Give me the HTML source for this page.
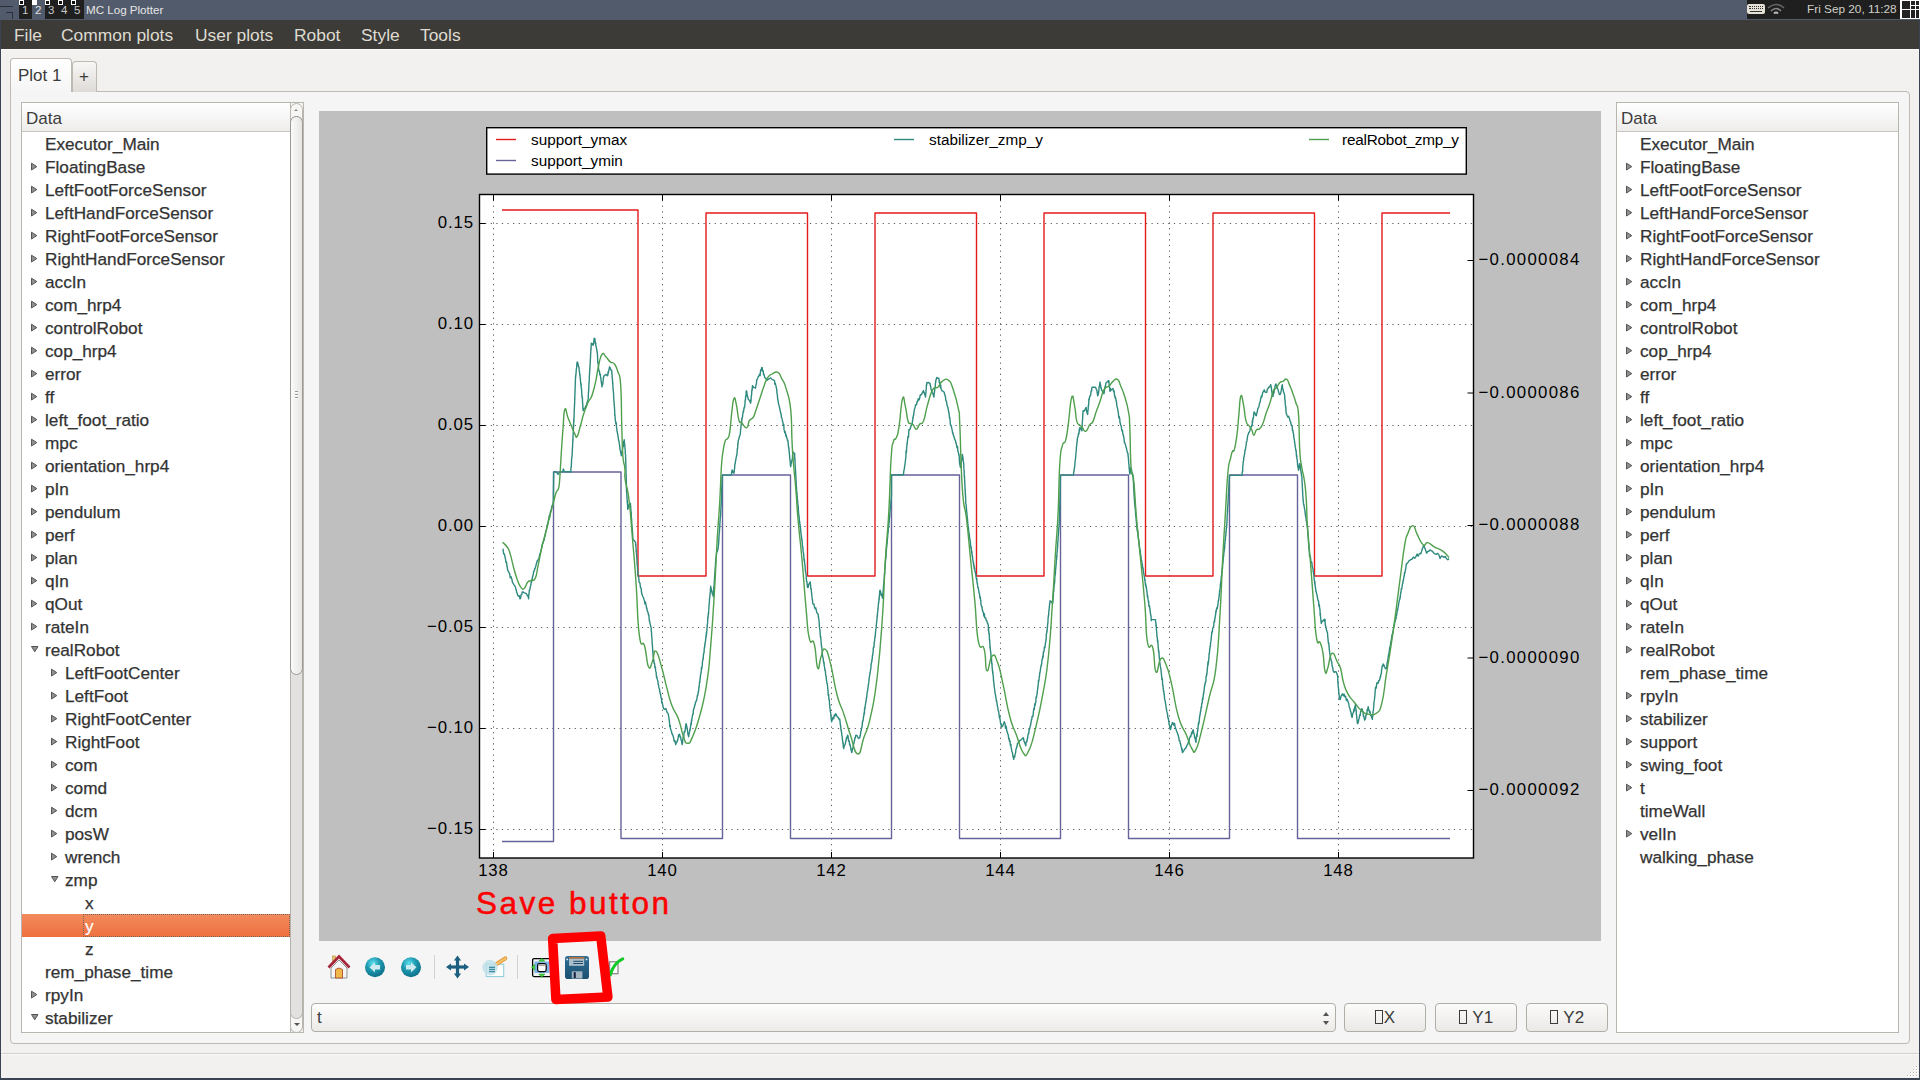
<!DOCTYPE html>
<html><head><meta charset="utf-8"><style>
*{margin:0;padding:0;box-sizing:border-box}
html,body{width:1920px;height:1080px;overflow:hidden;background:#f2f1f0;font-family:"Liberation Sans", sans-serif;}
div{position:absolute}
.row{font-size:17.2px;color:#333;-webkit-text-stroke:0.25px #333;white-space:nowrap;line-height:22px}
.white{color:#fff;-webkit-text-stroke:0.2px #fff}
.arr-r{width:0;height:0;border-top:3.5px solid transparent;border-bottom:3.5px solid transparent;border-left:5.5px solid #7f7f7f}
.arr-d{width:0;height:0;border-left:3.5px solid transparent;border-right:3.5px solid transparent;border-top:6px solid #7f7f7f}
.sel{height:23px;background:linear-gradient(#f28a5c,#ee7040)}
.seldot{height:23px;border:1px dotted #7d6458}
.menu{font-size:17.4px;color:#dfdbd2;top:23px;line-height:24px;white-space:nowrap}
.btn{top:1003px;height:29px;border:1px solid #b1ada7;border-radius:4px;background:linear-gradient(#fbfbfa,#ebe9e7);font-size:17px;color:#3c3c3c;text-align:center;line-height:27px;width:82px}
.tofu{display:inline-block;width:8px;height:14px;border:1px solid #3c3c3c;vertical-align:-1px;margin-right:1px}
</style></head><body>
<!-- top panel -->
<div style="left:0;top:0;width:1920px;height:20px;background:#525b6b"></div>
<div style="left:19px;top:0;width:13px;height:19px;background:#1f1f1f"></div>
<div style="left:45px;top:0;width:39px;height:19px;background:#1f1f1f"></div>
<div style="left:19px;top:0;width:5px;height:5px;border:1px solid #fff;background:#111"></div>
<div style="left:32px;top:0;width:5px;height:5px;background:#fff"></div>
<div style="left:45px;top:0;width:5px;height:5px;border:1px solid #fff;background:#111"></div>
<div style="left:58px;top:0;width:5px;height:5px;border:1px solid #fff;background:#111"></div>
<div style="left:71px;top:0;width:5px;height:5px;border:1px solid #fff;background:#111"></div>
<div style="left:0;top:6px;width:13px;height:1px;background:#2a2f38"></div>
<div style="left:6px;top:12px;width:7px;height:1px;background:#2a2f38"></div>
<div style="left:12px;top:12px;width:1px;height:7px;background:#2a2f38"></div>
<div style="left:22px;top:3px;font-size:11.5px;color:#c9c9c9;line-height:14px">1</div>
<div style="left:35px;top:3px;font-size:11.5px;color:#e4e4e4;line-height:14px">2</div>
<div style="left:48px;top:3px;font-size:11.5px;color:#c9c9c9;line-height:14px">3</div>
<div style="left:61px;top:3px;font-size:11.5px;color:#c9c9c9;line-height:14px">4</div>
<div style="left:74px;top:3px;font-size:11.5px;color:#c9c9c9;line-height:14px">5</div>
<div style="left:86px;top:2px;font-size:11.6px;color:#e6e6e6;line-height:15px;white-space:nowrap">MC Log Plotter</div>
<div style="left:1747px;top:0;width:153px;height:19px;background:#1f1f1f"></div>
<div style="left:1747px;top:4px;width:18px;height:10px;background:#e4e0d6;border-radius:2px"></div>
<div style="left:1749px;top:6px;width:14px;height:1px;border-top:1px dotted #333"></div>
<div style="left:1749px;top:8px;width:14px;height:1px;border-top:1px dotted #333"></div>
<div style="left:1750px;top:11px;width:12px;height:1px;background:#333"></div>
<svg style="position:absolute;left:1767px;top:3px" width="18" height="13"><path d="M1,5 Q9,-2 17,5" fill="none" stroke="#666" stroke-width="1.6"/><path d="M4,8 Q9,3 14,8" fill="none" stroke="#888" stroke-width="1.6"/><path d="M7,10.5 Q9,8.5 11,10.5" fill="none" stroke="#bbb" stroke-width="1.8"/></svg>
<div style="left:1807px;top:2px;font-size:11.8px;color:#d2cfc8;line-height:15px;white-space:nowrap">Fri Sep 20, 11:28</div>
<div style="left:1900px;top:0;width:20px;height:19px;background:#fff"></div>
<div style="left:1902px;top:1px;width:8px;height:8px;background:#222"></div>
<div style="left:1902px;top:10px;width:8px;height:8px;background:#222"></div>
<div style="left:1911px;top:1px;width:3.5px;height:3.5px;background:#222"></div>
<div style="left:1915.5px;top:1px;width:3.5px;height:3.5px;background:#222"></div>
<div style="left:1911px;top:5.5px;width:3.5px;height:3.5px;background:#222"></div>
<div style="left:1915.5px;top:5.5px;width:3.5px;height:3.5px;background:#222"></div>
<div style="left:1911px;top:10px;width:3.5px;height:8px;background:#222"></div>
<div style="left:1915.5px;top:10px;width:3.5px;height:8px;background:#222"></div>
<!-- window frame -->
<div style="left:0;top:20px;width:1px;height:1060px;background:#3b4452"></div>
<div style="left:1919px;top:20px;width:1px;height:1060px;background:#3b4452"></div>
<div style="left:0;top:1078px;width:1920px;height:2px;background:#3b4452"></div>
<!-- menubar -->
<div style="left:1px;top:20px;width:1918px;height:29px;background:#3c3b37"></div>
<div style="left:1px;top:49px;width:1918px;height:1px;background:#fbfbfb"></div>
<div class="menu" style="left:14px">File</div>
<div class="menu" style="left:61px">Common plots</div>
<div class="menu" style="left:195px">User plots</div>
<div class="menu" style="left:294px">Robot</div>
<div class="menu" style="left:361px">Style</div>
<div class="menu" style="left:420px">Tools</div>
<!-- tab pane -->
<div style="left:10px;top:91px;width:1900px;height:953px;border:1px solid #bdb9b3;border-radius:0 4px 4px 4px;background:#f5f5f5"></div>
<div style="left:72px;top:61px;width:25px;height:31px;border:1px solid #bdb9b3;border-bottom:none;border-radius:4px 4px 0 0;background:linear-gradient(#f7f7f6,#dedbd7)"></div>
<div style="left:79px;top:65.5px;font-size:17px;color:#3c3c3c;line-height:22px">+</div>
<div style="left:10px;top:58px;width:62px;height:34px;border:1px solid #bdb9b3;border-bottom:none;border-radius:4px 4px 0 0;background:linear-gradient(#ffffff,#f5f5f5)"></div>
<div style="left:18px;top:65px;font-size:17px;color:#3c3c3c;line-height:22px;white-space:nowrap">Plot 1</div>
<div style="left:1px;top:1053px;width:1918px;height:1px;background:#d3d0cb"></div>
<div style="left:1px;top:1054px;width:1918px;height:1px;background:#fafafa"></div>
<div style="left:1916px;top:1066px;width:2px;height:2px;background:#b8b4ae;border-right:1px solid #fff;border-bottom:1px solid #fff;box-sizing:content-box;width:1px;height:1px"></div><div style="left:1913px;top:1069px;width:2px;height:2px;background:#b8b4ae;border-right:1px solid #fff;border-bottom:1px solid #fff;box-sizing:content-box;width:1px;height:1px"></div><div style="left:1916px;top:1069px;width:2px;height:2px;background:#b8b4ae;border-right:1px solid #fff;border-bottom:1px solid #fff;box-sizing:content-box;width:1px;height:1px"></div><div style="left:1910px;top:1072px;width:2px;height:2px;background:#b8b4ae;border-right:1px solid #fff;border-bottom:1px solid #fff;box-sizing:content-box;width:1px;height:1px"></div><div style="left:1913px;top:1072px;width:2px;height:2px;background:#b8b4ae;border-right:1px solid #fff;border-bottom:1px solid #fff;box-sizing:content-box;width:1px;height:1px"></div><div style="left:1916px;top:1072px;width:2px;height:2px;background:#b8b4ae;border-right:1px solid #fff;border-bottom:1px solid #fff;box-sizing:content-box;width:1px;height:1px"></div><div style="left:1907px;top:1075px;width:2px;height:2px;background:#b8b4ae;border-right:1px solid #fff;border-bottom:1px solid #fff;box-sizing:content-box;width:1px;height:1px"></div><div style="left:1910px;top:1075px;width:2px;height:2px;background:#b8b4ae;border-right:1px solid #fff;border-bottom:1px solid #fff;box-sizing:content-box;width:1px;height:1px"></div><div style="left:1913px;top:1075px;width:2px;height:2px;background:#b8b4ae;border-right:1px solid #fff;border-bottom:1px solid #fff;box-sizing:content-box;width:1px;height:1px"></div><div style="left:1916px;top:1075px;width:2px;height:2px;background:#b8b4ae;border-right:1px solid #fff;border-bottom:1px solid #fff;box-sizing:content-box;width:1px;height:1px"></div>
<!-- left tree -->
<div style="left:21px;top:102px;width:283px;height:931px;border:1px solid #b9b5af;background:#fff;overflow:hidden">
</div>
<div style="left:22px;top:103px;width:268px;height:29px;background:linear-gradient(#ffffff,#eeedec);border-bottom:1px solid #c8c4be"></div>
<div style="left:26px;top:107.5px;font-size:17px;color:#3c3c3c;line-height:22px">Data</div>
<div class="row" style="left:45px;top:133px">Executor_Main</div>
<div class="row" style="left:45px;top:156px">FloatingBase</div>
<div class="row" style="left:45px;top:179px">LeftFootForceSensor</div>
<div class="row" style="left:45px;top:202px">LeftHandForceSensor</div>
<div class="row" style="left:45px;top:225px">RightFootForceSensor</div>
<div class="row" style="left:45px;top:248px">RightHandForceSensor</div>
<div class="row" style="left:45px;top:271px">accIn</div>
<div class="row" style="left:45px;top:294px">com_hrp4</div>
<div class="row" style="left:45px;top:317px">controlRobot</div>
<div class="row" style="left:45px;top:340px">cop_hrp4</div>
<div class="row" style="left:45px;top:363px">error</div>
<div class="row" style="left:45px;top:386px">ff</div>
<div class="row" style="left:45px;top:409px">left_foot_ratio</div>
<div class="row" style="left:45px;top:432px">mpc</div>
<div class="row" style="left:45px;top:455px">orientation_hrp4</div>
<div class="row" style="left:45px;top:478px">pIn</div>
<div class="row" style="left:45px;top:501px">pendulum</div>
<div class="row" style="left:45px;top:524px">perf</div>
<div class="row" style="left:45px;top:547px">plan</div>
<div class="row" style="left:45px;top:570px">qIn</div>
<div class="row" style="left:45px;top:593px">qOut</div>
<div class="row" style="left:45px;top:616px">rateIn</div>
<div class="row" style="left:45px;top:639px">realRobot</div>
<div class="row" style="left:65px;top:662px">LeftFootCenter</div>
<div class="row" style="left:65px;top:685px">LeftFoot</div>
<div class="row" style="left:65px;top:708px">RightFootCenter</div>
<div class="row" style="left:65px;top:731px">RightFoot</div>
<div class="row" style="left:65px;top:754px">com</div>
<div class="row" style="left:65px;top:777px">comd</div>
<div class="row" style="left:65px;top:800px">dcm</div>
<div class="row" style="left:65px;top:823px">posW</div>
<div class="row" style="left:65px;top:846px">wrench</div>
<div class="row" style="left:65px;top:869px">zmp</div>
<div class="row" style="left:85px;top:892px">x</div>
<div class="sel" style="top:914px;left:22px;width:268px"></div>
<div class="seldot" style="top:914px;left:83px;width:207px"></div>
<div class="row white" style="left:85px;top:915px">y</div>
<div class="row" style="left:85px;top:938px">z</div>
<div class="row" style="left:45px;top:961px">rem_phase_time</div>
<div class="row" style="left:45px;top:984px">rpyIn</div>
<div class="row" style="left:45px;top:1007px">stabilizer</div>
<div style="left:290px;top:103px;width:13px;height:929px;background:#f5f5f4;border-left:1px solid #b9b5af"></div>
<div style="left:290px;top:103px;width:13px;height:26px;border:1px solid #b9b5af;border-radius:6.5px 6.5px 0 0;background:#f6f6f5"></div>
<div style="left:294px;top:109px;width:0;height:0;border-left:2.5px solid transparent;border-right:2.5px solid transparent;border-bottom:2.5px solid #8a8a8a"></div>
<div style="left:290px;top:116px;width:13px;height:903px;border:1px solid #b5b1ab;border-radius:6.5px;background:#e2e1df"></div>
<div style="left:290px;top:1006px;width:13px;height:27px;border:1px solid #b9b5af;border-top:none;border-radius:0 0 6.5px 6.5px;background:#f6f6f5"></div>
<div style="left:290px;top:1000px;width:13px;height:19px;border:1px solid #b5b1ab;border-top:none;border-radius:0 0 6.5px 6.5px;background:#e2e1df"></div>
<div style="left:293.5px;top:1023px;width:0;height:0;border-left:3px solid transparent;border-right:3px solid transparent;border-top:3px solid #555"></div>
<div style="left:290px;top:116px;width:13px;height:559px;border:1px solid #9d9994;border-radius:6.5px;background:linear-gradient(90deg,#fbfbfb,#e6e5e4)"></div><div style="left:295px;top:391px;width:3px;height:1px;background:#9a9a9a;border-bottom:1px solid #fff;box-sizing:content-box"></div><div style="left:295px;top:394px;width:3px;height:1px;background:#9a9a9a;border-bottom:1px solid #fff;box-sizing:content-box"></div><div style="left:295px;top:397px;width:3px;height:1px;background:#9a9a9a;border-bottom:1px solid #fff;box-sizing:content-box"></div>
<!-- canvas -->
<div style="left:319px;top:111px;width:1282px;height:830px;background:#bfbfbf"></div>
<!-- right tree -->
<div style="left:1616px;top:102px;width:283px;height:931px;border:1px solid #b9b5af;background:#fff"></div>
<div style="left:1617px;top:103px;width:281px;height:29px;background:linear-gradient(#ffffff,#eeedec);border-bottom:1px solid #c8c4be"></div>
<div style="left:1621px;top:107.5px;font-size:17px;color:#3c3c3c;line-height:22px">Data</div>
<div class="row" style="left:1640px;top:133px">Executor_Main</div>
<div class="row" style="left:1640px;top:156px">FloatingBase</div>
<div class="row" style="left:1640px;top:179px">LeftFootForceSensor</div>
<div class="row" style="left:1640px;top:202px">LeftHandForceSensor</div>
<div class="row" style="left:1640px;top:225px">RightFootForceSensor</div>
<div class="row" style="left:1640px;top:248px">RightHandForceSensor</div>
<div class="row" style="left:1640px;top:271px">accIn</div>
<div class="row" style="left:1640px;top:294px">com_hrp4</div>
<div class="row" style="left:1640px;top:317px">controlRobot</div>
<div class="row" style="left:1640px;top:340px">cop_hrp4</div>
<div class="row" style="left:1640px;top:363px">error</div>
<div class="row" style="left:1640px;top:386px">ff</div>
<div class="row" style="left:1640px;top:409px">left_foot_ratio</div>
<div class="row" style="left:1640px;top:432px">mpc</div>
<div class="row" style="left:1640px;top:455px">orientation_hrp4</div>
<div class="row" style="left:1640px;top:478px">pIn</div>
<div class="row" style="left:1640px;top:501px">pendulum</div>
<div class="row" style="left:1640px;top:524px">perf</div>
<div class="row" style="left:1640px;top:547px">plan</div>
<div class="row" style="left:1640px;top:570px">qIn</div>
<div class="row" style="left:1640px;top:593px">qOut</div>
<div class="row" style="left:1640px;top:616px">rateIn</div>
<div class="row" style="left:1640px;top:639px">realRobot</div>
<div class="row" style="left:1640px;top:662px">rem_phase_time</div>
<div class="row" style="left:1640px;top:685px">rpyIn</div>
<div class="row" style="left:1640px;top:708px">stabilizer</div>
<div class="row" style="left:1640px;top:731px">support</div>
<div class="row" style="left:1640px;top:754px">swing_foot</div>
<div class="row" style="left:1640px;top:777px">t</div>
<div class="row" style="left:1640px;top:800px">timeWall</div>
<div class="row" style="left:1640px;top:823px">velIn</div>
<div class="row" style="left:1640px;top:846px">walking_phase</div>
<!-- combo + buttons -->
<div style="left:311px;top:1003px;width:1025px;height:29px;border:1px solid #b1ada7;border-radius:4px;background:linear-gradient(#fdfdfd,#ecebe9)"></div>
<div style="left:317px;top:1007px;font-size:17px;color:#3c3c3c;line-height:22px">t</div>
<div style="left:1323px;top:1012px;width:0;height:0;border-left:3px solid transparent;border-right:3px solid transparent;border-bottom:4px solid #555"></div>
<div style="left:1323px;top:1021px;width:0;height:0;border-left:3px solid transparent;border-right:3px solid transparent;border-top:4px solid #555"></div>
<div class="btn" style="left:1344px"><span class="tofu"></span>X</div>
<div class="btn" style="left:1435px"><span class="tofu"></span> Y1</div>
<div class="btn" style="left:1526px"><span class="tofu"></span> Y2</div>
<svg style="position:absolute;left:0;top:0" width="1920" height="1080">

<!-- home -->
<g transform="translate(328,955)">
 <rect x="4.5" y="1" width="3" height="6" fill="#e8c46a" stroke="#b58a3a" stroke-width="0.6"/>
 <path d="M3,13 L11,5 L19,13 V23 H3 Z" fill="#f4f4f4" stroke="#8a9494" stroke-width="1"/>
 <path d="M7.5,23 V14.5 Q11,11.5 14.5,14.5 V23 Z" fill="#f0b84a" stroke="#a8401c" stroke-width="0.8"/>
 <path d="M0.5,12.5 L11,1.5 L21.5,12.5" fill="none" stroke="#a8243a" stroke-width="2.6" stroke-linejoin="miter"/>
</g>
<!-- back -->
<defs>
 <radialGradient id="bl" cx="0.4" cy="0.3" r="0.75"><stop offset="0" stop-color="#5fe0f0"/><stop offset="0.45" stop-color="#1e9ab0"/><stop offset="1" stop-color="#0d6b86"/></radialGradient>
 <linearGradient id="fd" x1="0" y1="0" x2="0" y2="1"><stop offset="0" stop-color="#2f6f95"/><stop offset="1" stop-color="#1a4f70"/></linearGradient>
 <clipPath id="axclip"><rect x="480" y="195" width="993" height="663"/></clipPath>
</defs>
<circle cx="375" cy="967.3" r="10" fill="url(#bl)"/>
<path d="M369.5,967.3 L375,962.2 V965 H380 V969.6 H375 V972.4 Z" fill="#cdeaf0"/>
<circle cx="411" cy="967.3" r="10" fill="url(#bl)"/>
<path d="M416.5,967.3 L411,962.2 V965 H406 V969.6 H411 V972.4 Z" fill="#cdeaf0"/>
<line x1="434.5" y1="955" x2="434.5" y2="979" stroke="#d4d2cf" stroke-width="1"/>
<!-- move -->
<g fill="#1d5f80" transform="translate(457.5,967)">
 <rect x="-1.6" y="-8" width="3.2" height="16"/><rect x="-8" y="-1.6" width="16" height="3.2"/>
 <path d="M0,-11.5 L-3.6,-6.5 H3.6 Z M0,11.5 L-3.6,6.5 H3.6 Z M-11.5,0 L-6.5,-3.6 V3.6 Z M11.5,0 L6.5,-3.6 V3.6 Z"/>
</g>
<!-- zoom -->
<g transform="translate(478,950)">
 <rect x="8.3" y="14.3" width="17.4" height="12.3" fill="#fdfdfe" stroke="#94cdd9" stroke-width="1.1"/>
 <line x1="18.6" y1="14" x2="27.3" y2="8.4" stroke="#e2923a" stroke-width="4" stroke-linecap="round"/>
 <line x1="18.6" y1="14" x2="27.3" y2="8.4" stroke="#f5c162" stroke-width="2.4" stroke-linecap="round"/>
 <circle cx="12" cy="17.6" r="7.3" fill="#bfe0e8" fill-opacity="0.8" stroke="#c4e2ea" stroke-width="0.8"/>
 <g stroke="#3f8ea3" stroke-width="1.4"><line x1="11" y1="17.3" x2="17" y2="17.3"/><line x1="11" y1="19.4" x2="17" y2="19.4"/><line x1="11" y1="21.6" x2="17" y2="21.6"/></g>
</g>
<line x1="517.5" y1="955" x2="517.5" y2="979" stroke="#d4d2cf" stroke-width="1"/>
<!-- subplots -->
<g transform="translate(532,958)">
 <rect x="0.6" y="0.6" width="19" height="18" fill="#f2f2f2" stroke="#000" stroke-width="1.3" rx="1.5"/>
 <rect x="2.5" y="3.5" width="15" height="11.5" fill="#7fb6ea"/>
 <rect x="5.6" y="5.6" width="8.6" height="8" fill="#fff" stroke="#000" stroke-width="1.2" rx="1.8"/>
 <rect x="6.5" y="6.3" width="7" height="1.8" fill="#aaa"/>
 <path d="M9.8,0.2 L6.8,3.2 H12.8 Z M9.8,19.3 L6.8,16 H12.8 Z M-0.5,9.3 L2.8,6.3 V12.3 Z" fill="#3fcf3f" stroke="#1a9a1a" stroke-width="0.5"/>
</g>
<!-- save -->
<g transform="translate(565,956)">
 <rect x="0" y="0" width="24" height="23" rx="2.8" fill="url(#fd)"/>
 <rect x="4" y="1" width="15.5" height="1.8" fill="#b8703e"/>
 <rect x="4" y="2.8" width="15.2" height="7" fill="#a9bfcc"/>
 <g stroke="#1d4868" stroke-width="1"><line x1="8.3" y1="5.3" x2="18" y2="5.3"/><line x1="8.3" y1="7.5" x2="18" y2="7.5"/></g>
 <rect x="6.8" y="15.3" width="10.6" height="7.2" fill="#a2b4c0"/>
 <rect x="8.7" y="16.2" width="2.1" height="5.8" fill="#16243f"/>
 <circle cx="2.2" cy="3.4" r="0.9" fill="#e8eef2"/><circle cx="21.6" cy="3.4" r="0.9" fill="#e8eef2"/>
</g>
<!-- check -->
<g transform="translate(609,957)">
 <rect x="0.6" y="4.8" width="8.4" height="11.9" fill="#fff" stroke="#8a8a8a" stroke-width="1.3"/>
 <path d="M1.2,18 Q4.5,6 13.7,1.8" fill="none" stroke="#14c828" stroke-width="3.1" stroke-linecap="round"/>
</g>
<!-- red annotation rectangle -->
<path d="M552.6,938.6 L600.7,935.9 L607.9,997 L555.9,999.4 Z" fill="none" stroke="#ff0000" stroke-width="9.5" stroke-linejoin="round"/>

<g fill="#909090" stroke="#555" stroke-width="1" stroke-linejoin="round"><path d="M31.5,163.2 V170 L36.8,166.6 Z"/><path d="M31.5,186.2 V193 L36.8,189.6 Z"/><path d="M31.5,209.2 V216 L36.8,212.6 Z"/><path d="M31.5,232.2 V239 L36.8,235.6 Z"/><path d="M31.5,255.2 V262 L36.8,258.6 Z"/><path d="M31.5,278.2 V285 L36.8,281.6 Z"/><path d="M31.5,301.2 V308 L36.8,304.6 Z"/><path d="M31.5,324.2 V331 L36.8,327.6 Z"/><path d="M31.5,347.2 V354 L36.8,350.6 Z"/><path d="M31.5,370.2 V377 L36.8,373.6 Z"/><path d="M31.5,393.2 V400 L36.8,396.6 Z"/><path d="M31.5,416.2 V423 L36.8,419.6 Z"/><path d="M31.5,439.2 V446 L36.8,442.6 Z"/><path d="M31.5,462.2 V469 L36.8,465.6 Z"/><path d="M31.5,485.2 V492 L36.8,488.6 Z"/><path d="M31.5,508.2 V515 L36.8,511.6 Z"/><path d="M31.5,531.2 V538 L36.8,534.6 Z"/><path d="M31.5,554.2 V561 L36.8,557.6 Z"/><path d="M31.5,577.2 V584 L36.8,580.6 Z"/><path d="M31.5,600.2 V607 L36.8,603.6 Z"/><path d="M31.5,623.2 V630 L36.8,626.6 Z"/><path d="M31.5,646.5 H38 L34.75,651.8 Z"/><path d="M51.5,669.2 V676 L56.8,672.6 Z"/><path d="M51.5,692.2 V699 L56.8,695.6 Z"/><path d="M51.5,715.2 V722 L56.8,718.6 Z"/><path d="M51.5,738.2 V745 L56.8,741.6 Z"/><path d="M51.5,761.2 V768 L56.8,764.6 Z"/><path d="M51.5,784.2 V791 L56.8,787.6 Z"/><path d="M51.5,807.2 V814 L56.8,810.6 Z"/><path d="M51.5,830.2 V837 L56.8,833.6 Z"/><path d="M51.5,853.2 V860 L56.8,856.6 Z"/><path d="M51.5,876.5 H58 L54.75,881.8 Z"/><path d="M31.5,991.2 V998 L36.8,994.6 Z"/><path d="M31.5,1014.5 H38 L34.75,1019.8 Z"/><path d="M1626.5,163.2 V170 L1631.8,166.6 Z"/><path d="M1626.5,186.2 V193 L1631.8,189.6 Z"/><path d="M1626.5,209.2 V216 L1631.8,212.6 Z"/><path d="M1626.5,232.2 V239 L1631.8,235.6 Z"/><path d="M1626.5,255.2 V262 L1631.8,258.6 Z"/><path d="M1626.5,278.2 V285 L1631.8,281.6 Z"/><path d="M1626.5,301.2 V308 L1631.8,304.6 Z"/><path d="M1626.5,324.2 V331 L1631.8,327.6 Z"/><path d="M1626.5,347.2 V354 L1631.8,350.6 Z"/><path d="M1626.5,370.2 V377 L1631.8,373.6 Z"/><path d="M1626.5,393.2 V400 L1631.8,396.6 Z"/><path d="M1626.5,416.2 V423 L1631.8,419.6 Z"/><path d="M1626.5,439.2 V446 L1631.8,442.6 Z"/><path d="M1626.5,462.2 V469 L1631.8,465.6 Z"/><path d="M1626.5,485.2 V492 L1631.8,488.6 Z"/><path d="M1626.5,508.2 V515 L1631.8,511.6 Z"/><path d="M1626.5,531.2 V538 L1631.8,534.6 Z"/><path d="M1626.5,554.2 V561 L1631.8,557.6 Z"/><path d="M1626.5,577.2 V584 L1631.8,580.6 Z"/><path d="M1626.5,600.2 V607 L1631.8,603.6 Z"/><path d="M1626.5,623.2 V630 L1631.8,626.6 Z"/><path d="M1626.5,646.2 V653 L1631.8,649.6 Z"/><path d="M1626.5,692.2 V699 L1631.8,695.6 Z"/><path d="M1626.5,715.2 V722 L1631.8,718.6 Z"/><path d="M1626.5,738.2 V745 L1631.8,741.6 Z"/><path d="M1626.5,761.2 V768 L1631.8,764.6 Z"/><path d="M1626.5,784.2 V791 L1631.8,787.6 Z"/><path d="M1626.5,830.2 V837 L1631.8,833.6 Z"/></g>
<rect x="479.5" y="194.5" width="994.0" height="663.5" fill="#fff"/>
<g stroke="#444" stroke-width="0.9" stroke-dasharray="1.2 4.4" fill="none">
<line x1="493.5" y1="194.5" x2="493.5" y2="858"/>
<line x1="662.5" y1="194.5" x2="662.5" y2="858"/>
<line x1="831.5" y1="194.5" x2="831.5" y2="858"/>
<line x1="1000.5" y1="194.5" x2="1000.5" y2="858"/>
<line x1="1169.5" y1="194.5" x2="1169.5" y2="858"/>
<line x1="1338.5" y1="194.5" x2="1338.5" y2="858"/>
<line x1="479.5" y1="223.5" x2="1473.5" y2="223.5"/>
<line x1="479.5" y1="324.5" x2="1473.5" y2="324.5"/>
<line x1="479.5" y1="425.5" x2="1473.5" y2="425.5"/>
<line x1="479.5" y1="526.5" x2="1473.5" y2="526.5"/>
<line x1="479.5" y1="627.5" x2="1473.5" y2="627.5"/>
<line x1="479.5" y1="728.5" x2="1473.5" y2="728.5"/>
<line x1="479.5" y1="829.5" x2="1473.5" y2="829.5"/>
</g>
<g fill="none" stroke-width="1.4" stroke-linejoin="round" clip-path="url(#axclip)">
<path d="M502,210 L638,210 L638,576 L706,576 L706,213 L807.5,213 L807.5,576 L875,576 L875,213 L976.5,213 L976.5,576 L1044,576 L1044,213 L1145.5,213 L1145.5,576 L1213,576 L1213,213 L1314.5,213 L1314.5,576 L1382,576 L1382,213 L1450,213" stroke="#e41a1c"/>
<path d="M502,841.5 L553.5,841.5 L553.5,472 L621,472 L621,838.5 L722.5,838.5 L722.5,475 L790.5,475 L790.5,838.5 L891.5,838.5 L891.5,475 L959.5,475 L959.5,838.5 L1060.5,838.5 L1060.5,475 L1128.5,475 L1128.5,838.5 L1229.5,838.5 L1229.5,475 L1297.5,475 L1297.5,838.5 L1450,838.5" stroke="#66639a"/>
<path d="M502.6,548.9 L503.0,549.1 L503.4,552.0 L503.8,554.1 L504.2,553.9 L504.6,554.5 L505.0,557.1 L505.4,558.6 L505.7,560.5 L506.0,562.5 L506.3,561.6 L506.6,562.9 L507.0,566.3 L507.3,567.4 L507.6,569.9 L507.9,570.7 L508.2,571.1 L508.9,572.4 L509.6,573.6 L510.3,577.9 L511.0,576.7 L511.4,577.8 L511.7,578.7 L512.0,579.7 L512.4,582.2 L513.3,583.7 L514.2,585.1 L515.1,586.4 L515.5,587.4 L515.9,589.1 L516.4,590.8 L516.8,592.6 L517.2,593.3 L517.9,595.8 L518.6,596.3 L519.3,595.7 L520.0,598.9 L520.6,598.2 L521.1,594.7 L521.7,594.6 L522.2,591.9 L522.8,592.0 L524.2,592.7 L525.6,593.3 L526.5,593.7 L527.4,595.8 L528.3,596.8 L528.6,598.8 L528.8,594.2 L529.1,593.7 L529.3,590.3 L529.6,590.0 L529.9,589.7 L530.1,587.6 L530.4,586.4 L530.7,585.5 L531.0,584.0 L531.3,581.6 L531.6,581.9 L531.9,579.2 L532.1,580.6 L532.4,577.0 L532.7,576.9 L533.0,574.9 L533.3,574.6 L533.6,571.8 L533.9,571.1 L534.4,570.7 L534.8,568.2 L535.3,568.2 L535.8,566.2 L536.2,564.3 L536.7,562.8 L537.2,560.6 L537.8,560.8 L538.3,559.1 L538.9,558.8 L539.4,555.8 L539.8,554.0 L540.2,553.6 L540.6,552.1 L541.0,550.5 L541.3,549.1 L541.7,547.6 L542.1,545.5 L542.5,543.7 L542.9,543.3 L543.2,541.5 L543.6,541.1 L544.0,540.6 L544.3,538.7 L544.6,537.4 L545.0,535.8 L545.4,534.3 L545.7,532.2 L546.0,531.0 L546.3,530.2 L546.6,529.8 L546.9,526.3 L547.3,524.6 L547.6,525.8 L547.9,522.7 L548.2,522.1 L548.5,519.7 L548.9,519.2 L549.2,515.8 L549.5,518.0 L549.9,515.9 L550.2,513.0 L550.6,511.4 L551.0,510.8 L551.4,508.8 L551.8,506.4 L552.1,505.7 L552.5,504.8 L552.9,504.2 L553.3,501.7 L553.3,501.1 L553.3,499.1 L553.4,499.0 L553.4,495.6 L553.4,495.8 L553.4,494.8 L553.4,492.0 L553.5,489.2 L553.5,488.7 L553.5,488.5 L553.5,487.5 L553.5,487.2 L553.6,483.3 L553.6,482.9 L553.6,482.2 L553.6,480.1 L553.6,476.5 L553.7,478.4 L553.7,478.5 L553.7,475.9 L553.7,472.6 L553.8,472.2 L555.2,471.7 L556.6,472.3 L558.1,474.4 L559.5,472.5 L561.0,471.9 L562.4,471.7 L562.8,471.9 L563.3,468.9 L563.8,470.2 L564.4,471.7 L566.0,471.7 L567.5,471.7 L569.1,471.7 L570.7,471.7 L570.8,472.2 L570.9,468.2 L571.1,467.1 L571.2,466.9 L571.3,466.2 L571.4,464.0 L571.5,462.3 L571.6,458.7 L571.8,458.5 L571.9,457.2 L572.0,455.9 L572.1,455.0 L572.2,454.3 L572.2,452.1 L572.3,451.9 L572.4,449.9 L572.4,448.2 L572.5,447.3 L572.6,446.3 L572.6,445.4 L572.7,442.8 L572.8,441.7 L572.8,439.3 L572.9,441.0 L573.0,439.5 L573.0,436.6 L573.1,435.0 L573.2,432.9 L573.2,433.0 L573.3,431.8 L573.3,432.4 L573.4,429.2 L573.5,426.9 L573.5,423.9 L573.6,426.4 L573.7,423.9 L573.7,420.8 L573.8,421.3 L573.9,418.2 L573.9,422.0 L574.0,418.3 L574.1,416.5 L574.1,414.4 L574.2,413.3 L574.2,409.8 L574.3,410.5 L574.4,407.7 L574.4,408.5 L574.5,404.5 L574.5,404.4 L574.6,405.1 L574.6,404.2 L574.7,400.1 L574.7,398.4 L574.8,399.4 L574.8,398.1 L574.9,394.9 L574.9,393.9 L575.0,392.5 L575.0,390.7 L575.1,389.9 L575.1,390.4 L575.1,388.5 L575.2,388.6 L575.2,385.1 L575.3,383.7 L575.4,381.5 L575.4,381.0 L575.5,378.5 L575.5,376.7 L575.6,377.8 L575.6,375.8 L575.8,375.9 L575.9,374.0 L576.1,373.2 L576.2,370.8 L576.4,368.5 L576.6,368.0 L576.7,366.2 L576.9,364.1 L577.0,362.2 L577.2,362.6 L577.7,362.3 L578.1,365.0 L578.5,366.4 L579.0,367.5 L579.1,368.3 L579.3,371.5 L579.5,371.6 L579.6,373.3 L579.8,375.2 L579.9,374.5 L580.0,374.6 L580.2,378.7 L580.4,378.5 L580.5,381.8 L580.6,382.1 L580.8,384.1 L580.9,385.2 L581.1,383.6 L581.2,387.7 L581.4,388.3 L581.5,388.9 L581.6,390.2 L581.7,391.8 L581.8,394.3 L581.9,395.7 L582.0,397.2 L582.1,395.8 L582.2,398.2 L582.4,397.7 L582.5,401.3 L582.6,403.3 L582.7,403.3 L582.8,405.6 L582.9,406.9 L583.0,409.0 L583.1,408.5 L583.2,410.6 L584.2,408.4 L585.3,407.8 L585.8,405.6 L586.2,406.8 L586.7,404.7 L587.2,402.1 L587.6,401.0 L588.1,399.4 L588.2,398.2 L588.3,396.9 L588.3,395.2 L588.4,393.7 L588.5,391.5 L588.6,390.8 L588.6,391.7 L588.7,389.3 L588.8,387.5 L588.9,385.8 L588.9,384.8 L589.0,383.7 L589.1,381.4 L589.2,380.9 L589.3,379.6 L589.3,377.3 L589.4,375.9 L589.5,374.4 L589.6,373.0 L589.6,373.6 L589.7,369.0 L589.8,369.8 L589.9,368.1 L589.9,366.7 L590.0,366.1 L590.1,364.7 L590.2,364.5 L590.2,362.1 L590.3,360.5 L590.4,358.7 L590.5,357.9 L590.5,357.5 L590.6,354.9 L590.7,352.8 L590.8,351.3 L590.9,350.2 L590.9,348.5 L591.0,349.7 L591.1,347.6 L591.1,345.7 L591.2,346.0 L591.3,343.2 L592.1,343.6 L592.9,345.3 L593.3,344.7 L593.6,343.3 L594.0,339.6 L594.3,338.1 L594.7,338.3 L594.9,338.8 L595.2,342.0 L595.4,343.8 L595.7,342.6 L595.9,346.3 L596.1,346.3 L596.4,347.6 L596.6,348.9 L596.9,350.5 L597.1,352.2 L597.2,351.8 L597.4,354.0 L597.5,355.1 L597.6,358.3 L597.7,361.2 L597.9,363.3 L598.0,361.6 L598.1,361.6 L598.2,364.3 L598.4,365.2 L598.5,367.5 L598.8,370.9 L599.1,370.8 L599.4,370.9 L599.7,374.0 L600.0,375.0 L600.3,374.2 L600.6,377.2 L600.8,378.1 L601.0,379.7 L601.2,381.4 L601.4,382.9 L601.6,383.8 L601.8,385.7 L602.0,386.9 L602.2,384.9 L602.5,383.2 L602.8,384.3 L603.0,381.7 L603.2,380.4 L603.5,377.0 L603.8,377.0 L604.0,375.8 L606.1,374.4 L607.5,375.8 L607.8,375.3 L608.1,371.9 L608.4,373.0 L608.7,370.3 L609.0,369.8 L609.3,368.0 L609.6,366.8 L610.3,368.2 L611.0,370.3 L611.7,370.3 L611.8,371.3 L611.9,374.6 L612.0,373.7 L612.1,374.9 L612.2,377.9 L612.3,377.5 L612.5,379.6 L612.6,382.3 L612.7,384.0 L612.8,382.4 L612.9,386.0 L613.0,388.8 L613.1,388.3 L613.2,390.8 L613.3,390.7 L613.4,391.7 L613.5,393.3 L613.6,393.8 L613.6,396.0 L613.7,397.4 L613.8,398.8 L613.9,401.4 L614.0,401.3 L614.1,401.4 L614.2,405.3 L614.3,404.5 L614.4,406.4 L614.5,408.1 L614.6,409.2 L614.6,409.9 L614.7,411.9 L614.8,415.7 L614.9,414.2 L615.0,416.0 L615.1,417.5 L615.3,420.0 L615.5,421.0 L615.7,422.4 L615.9,423.9 L616.2,422.5 L616.4,425.0 L616.6,427.4 L616.8,429.1 L617.0,431.3 L617.2,431.4 L617.4,433.3 L617.7,433.9 L617.9,435.6 L618.1,436.7 L618.4,438.6 L618.6,440.4 L618.8,440.8 L619.1,441.7 L619.3,443.9 L619.5,444.4 L619.8,447.6 L620.0,449.1 L620.2,450.1 L620.5,451.3 L620.7,452.6 L620.9,453.1 L621.2,455.1 L621.4,455.7 L621.6,453.3 L621.9,452.8 L622.1,451.0 L622.3,451.1 L622.6,448.5 L622.8,447.6 L623.0,446.8 L623.3,446.4 L623.5,442.9 L623.7,441.4 L624.0,441.9 L624.2,439.7 L624.3,440.0 L624.5,442.9 L624.6,443.3 L624.7,445.2 L624.8,444.8 L625.0,448.8 L625.1,448.9 L625.2,449.9 L625.3,454.3 L625.5,454.3 L625.6,455.0 L625.6,459.8 L625.7,458.0 L625.7,458.6 L625.7,460.4 L625.8,463.2 L625.8,462.8 L625.8,464.6 L625.9,466.0 L625.9,465.9 L625.9,468.2 L626.0,468.9 L626.0,469.5 L626.0,472.9 L626.1,474.0 L626.1,474.7 L626.1,475.1 L626.2,475.3 L626.2,479.1 L626.2,479.8 L626.3,479.5 L626.3,482.5 L626.3,482.3 L626.4,485.1 L626.4,486.6 L626.4,488.1 L626.5,489.3 L626.5,490.4 L626.6,492.0 L626.7,492.0 L626.8,494.2 L626.9,495.5 L627.0,497.1 L627.1,499.0 L627.2,500.8 L627.3,503.2 L627.4,500.4 L627.5,504.7 L627.6,505.5 L627.7,509.4 L627.8,508.5 L628.4,508.1 L629.1,504.2 L629.8,505.0 L630.4,503.3 L630.5,504.1 L630.6,507.0 L630.7,506.3 L630.8,508.6 L630.9,509.9 L631.0,511.3 L631.1,512.1 L631.2,512.2 L631.3,515.9 L631.4,517.7 L631.5,518.0 L631.6,518.4 L631.7,521.0 L631.7,522.7 L631.8,523.3 L631.9,524.8 L632.0,527.6 L632.1,526.4 L632.2,528.3 L632.3,528.3 L632.4,530.8 L632.5,532.1 L632.6,533.3 L632.7,534.9 L632.8,538.7 L632.9,538.1 L633.0,539.6 L634.3,540.8 L635.6,542.2 L635.7,545.7 L635.8,544.8 L635.9,544.5 L636.0,548.0 L636.1,548.0 L636.2,551.9 L636.3,550.4 L636.4,552.4 L636.5,552.7 L636.6,555.8 L636.7,556.0 L636.8,558.3 L636.9,559.3 L637.0,560.5 L637.1,563.4 L637.2,564.7 L637.3,565.2 L637.4,565.6 L637.5,566.7 L637.6,569.4 L637.7,572.9 L637.8,571.4 L637.9,572.4 L638.0,573.9 L638.1,575.9 L638.4,576.1 L638.7,577.5 L638.9,579.6 L639.2,582.5 L639.5,582.4 L639.8,583.1 L640.0,583.3 L640.3,586.5 L640.6,587.5 L640.9,587.6 L641.2,589.0 L641.4,591.4 L641.7,593.7 L642.0,594.0 L642.5,595.9 L643.0,596.8 L643.5,597.6 L644.0,599.5 L644.4,600.5 L644.9,604.0 L645.4,602.0 L645.9,604.4 L646.2,605.3 L646.5,608.3 L646.9,608.0 L647.2,611.0 L647.5,610.9 L647.9,612.3 L648.2,613.1 L648.5,614.8 L648.8,614.7 L649.0,616.4 L649.3,620.9 L649.5,620.6 L649.8,621.9 L650.1,623.6 L650.3,624.5 L650.6,626.2 L650.8,626.2 L651.1,627.8 L651.2,628.9 L651.3,631.5 L651.4,631.5 L651.5,631.9 L651.6,634.4 L651.7,635.4 L651.8,637.9 L651.9,637.9 L652.0,639.0 L652.1,641.0 L652.2,644.3 L652.3,644.0 L652.4,645.6 L652.5,646.8 L652.6,648.5 L652.7,650.4 L652.8,652.3 L652.9,650.6 L653.0,654.9 L653.1,654.9 L653.2,656.3 L653.4,657.3 L653.6,661.3 L653.9,660.0 L654.1,663.4 L654.3,663.8 L654.5,663.1 L654.8,665.9 L655.0,667.4 L655.2,667.9 L655.4,667.0 L655.6,670.3 L655.9,671.7 L656.1,672.1 L656.3,674.5 L656.6,677.6 L656.8,676.8 L657.1,678.0 L657.3,679.4 L657.6,680.2 L657.9,681.5 L658.1,683.6 L658.4,685.1 L658.6,685.6 L658.9,687.4 L659.2,688.6 L659.5,688.6 L659.7,691.8 L660.0,691.9 L660.3,694.1 L660.6,694.3 L660.8,696.0 L661.1,698.0 L661.4,697.9 L661.7,702.9 L662.0,701.7 L662.2,702.9 L662.5,703.6 L662.8,705.6 L663.5,708.3 L664.3,709.2 L665.0,709.2 L665.8,708.6 L666.5,710.6 L667.3,712.8 L668.0,713.3 L668.2,714.1 L668.4,714.7 L668.6,716.0 L668.9,717.7 L669.1,719.8 L669.3,720.5 L669.5,722.4 L669.7,726.5 L670.0,726.8 L670.2,725.3 L670.4,727.9 L670.6,728.9 L671.0,730.3 L671.5,731.4 L671.9,733.8 L672.3,733.8 L672.7,735.1 L673.2,736.3 L673.6,737.9 L674.0,740.6 L674.4,741.4 L674.9,740.6 L675.3,742.8 L675.7,744.5 L676.2,742.4 L676.7,742.7 L677.2,740.8 L677.7,740.2 L678.1,737.9 L678.6,734.8 L679.1,735.9 L679.6,734.1 L679.9,735.6 L680.2,737.2 L680.6,736.7 L680.9,739.4 L681.2,739.9 L681.6,741.2 L681.9,743.6 L682.2,744.5 L682.4,743.6 L682.7,741.0 L682.9,738.9 L683.2,736.8 L683.4,737.4 L683.7,737.8 L683.9,735.3 L684.2,731.8 L684.4,731.9 L684.6,731.9 L684.9,731.9 L685.1,730.1 L685.4,728.0 L685.6,726.5 L685.9,723.9 L686.1,723.7 L686.4,724.5 L686.6,726.0 L686.9,726.8 L687.1,729.0 L687.4,729.8 L687.7,731.8 L687.9,734.2 L688.2,734.8 L688.4,735.8 L688.7,736.7 L688.9,735.2 L689.2,732.6 L689.4,732.7 L689.6,732.1 L689.9,729.2 L690.1,730.2 L690.4,727.3 L690.6,726.7 L690.8,724.7 L691.1,722.5 L691.3,724.5 L691.5,720.0 L691.8,720.8 L692.0,718.0 L692.2,717.5 L692.5,715.2 L692.7,714.3 L693.0,714.3 L693.2,714.0 L693.4,709.9 L693.7,709.5 L693.9,708.2 L694.3,707.8 L694.7,705.0 L695.1,705.0 L695.5,702.2 L695.8,702.3 L696.2,700.8 L696.6,700.3 L697.0,698.2 L697.4,695.3 L697.8,695.2 L698.0,694.6 L698.2,691.5 L698.4,692.1 L698.5,691.5 L698.7,689.3 L698.9,686.9 L699.1,687.3 L699.3,685.0 L699.5,682.3 L699.7,681.9 L699.8,682.4 L700.0,679.3 L700.2,678.5 L700.4,676.7 L700.6,674.1 L700.8,673.9 L701.0,673.5 L701.1,672.1 L701.3,670.4 L701.5,667.1 L701.7,669.2 L701.9,667.4 L702.1,666.4 L702.3,665.4 L702.4,662.3 L702.6,660.9 L702.8,660.5 L703.0,658.9 L703.2,659.3 L703.4,654.6 L703.5,654.8 L703.7,653.0 L703.9,653.0 L704.1,652.6 L704.2,649.5 L704.4,647.3 L704.6,647.3 L704.8,645.7 L705.0,643.1 L705.1,644.2 L705.3,641.5 L705.5,641.4 L705.7,638.2 L705.8,639.3 L706.0,635.4 L706.2,636.6 L706.4,632.5 L706.5,634.4 L706.7,631.3 L706.9,630.4 L707.0,627.5 L707.1,627.6 L707.2,626.8 L707.3,624.2 L707.5,623.4 L707.6,622.9 L707.7,621.2 L707.8,617.0 L707.9,618.3 L708.0,617.9 L708.1,616.4 L708.2,615.8 L708.4,612.8 L708.5,614.8 L708.6,611.7 L708.7,610.0 L708.8,609.4 L708.9,608.0 L709.0,605.9 L709.1,603.8 L709.2,604.2 L709.4,602.3 L709.5,598.7 L709.6,598.2 L709.7,598.4 L709.8,596.8 L709.9,595.7 L710.0,594.7 L710.1,592.9 L710.3,593.1 L710.4,589.6 L710.5,588.5 L710.6,587.9 L710.7,586.3 L711.0,588.3 L711.4,589.7 L711.7,591.7 L712.0,591.0 L712.3,594.0 L712.6,594.6 L713.0,594.4 L713.3,596.7 L713.4,595.2 L713.5,596.1 L713.6,593.5 L713.7,590.9 L713.7,587.6 L713.8,587.9 L713.9,586.6 L714.0,586.0 L714.1,586.9 L714.2,584.0 L714.3,582.3 L714.4,579.7 L714.5,578.1 L714.6,577.7 L714.6,576.1 L714.7,578.2 L714.8,573.5 L714.9,571.9 L715.0,572.3 L715.1,569.9 L715.2,567.3 L715.3,568.5 L715.4,565.5 L715.5,563.2 L715.5,563.5 L715.6,562.3 L715.7,560.1 L715.8,559.8 L715.9,557.8 L716.2,557.3 L716.4,554.3 L716.7,551.8 L716.9,550.2 L717.2,551.2 L717.5,551.2 L717.7,549.7 L718.0,548.8 L718.2,548.0 L718.5,544.8 L718.6,543.5 L718.7,543.2 L718.8,539.2 L718.9,540.1 L718.9,538.5 L719.0,536.7 L719.1,535.0 L719.2,533.0 L719.3,532.9 L719.4,532.7 L719.5,529.7 L719.6,529.2 L719.7,526.7 L719.8,526.3 L719.8,523.7 L719.9,523.7 L720.0,521.8 L720.1,521.0 L720.2,518.7 L720.3,516.8 L720.4,516.3 L720.5,516.3 L720.6,515.5 L720.7,512.3 L720.7,512.1 L720.8,510.7 L720.9,509.0 L721.0,505.7 L721.1,505.9 L721.2,504.9 L721.2,502.3 L721.3,503.1 L721.3,501.3 L721.4,499.8 L721.4,495.3 L721.5,497.1 L721.5,495.9 L721.6,492.6 L721.6,493.5 L721.7,491.2 L721.7,489.6 L721.8,487.8 L721.8,486.1 L721.9,485.4 L721.9,487.6 L722.0,483.3 L722.0,482.0 L722.1,479.8 L722.1,478.5 L722.2,477.2 L722.2,475.6 L722.3,475.1 L723.8,475.1 L725.2,475.1 L726.7,475.1 L728.2,475.1 L729.6,475.1 L731.1,475.1 L731.4,474.3 L731.8,471.4 L732.1,470.0 L733.0,472.5 L734.0,473.2 L734.1,470.7 L734.3,471.5 L734.4,469.2 L734.6,468.6 L734.7,466.5 L734.9,464.4 L735.0,464.0 L735.2,463.9 L735.5,461.0 L735.8,460.0 L736.0,458.0 L736.2,457.8 L736.5,455.9 L736.8,455.3 L737.0,453.7 L737.1,452.7 L737.2,450.4 L737.4,448.4 L737.5,448.9 L737.6,448.1 L737.7,446.6 L737.8,443.5 L738.0,443.9 L738.1,442.4 L738.2,440.7 L738.6,439.7 L739.0,438.6 L739.4,436.5 L739.8,435.8 L740.2,434.3 L740.3,433.9 L740.5,431.2 L740.6,429.0 L740.8,429.0 L740.9,428.0 L741.1,424.7 L741.2,424.5 L741.4,424.5 L741.5,422.4 L741.7,421.4 L741.8,418.7 L742.0,419.6 L742.1,417.4 L742.4,417.9 L742.7,414.6 L743.0,412.8 L743.3,411.0 L743.5,411.8 L743.8,409.7 L744.1,407.5 L744.4,408.2 L744.7,405.7 L744.9,405.1 L745.0,403.6 L745.2,399.9 L745.3,400.2 L745.5,399.6 L745.6,396.3 L745.8,397.1 L745.9,396.3 L746.1,394.5 L746.2,391.4 L746.4,390.8 L746.8,391.5 L747.1,394.6 L747.5,396.0 L747.9,397.7 L748.2,399.1 L748.6,399.3 L749.3,400.5 L749.9,401.5 L750.6,403.2 L750.7,400.0 L750.9,401.3 L751.0,401.4 L751.2,397.3 L751.3,396.0 L751.5,395.7 L751.6,394.1 L751.8,391.0 L751.9,390.3 L752.1,388.6 L752.2,390.3 L752.4,386.2 L752.5,385.6 L753.8,387.5 L755.1,387.6 L755.4,388.2 L755.7,386.9 L756.0,385.1 L756.4,384.0 L756.7,379.9 L757.0,379.8 L757.7,378.2 L758.3,376.5 L759.0,375.9 L759.5,374.2 L760.1,375.7 L760.6,370.0 L761.1,370.9 L761.7,367.7 L762.2,367.5 L762.5,370.1 L762.9,371.4 L763.2,370.9 L763.5,374.8 L763.9,374.1 L764.2,375.3 L764.9,377.9 L765.5,378.2 L766.1,378.6 L766.8,380.5 L768.1,379.3 L769.4,378.6 L770.7,377.9 L772.0,379.4 L773.2,379.8 L774.5,380.5 L774.8,384.3 L775.2,383.1 L775.5,384.2 L775.8,385.4 L776.2,386.7 L776.5,388.9 L776.7,388.8 L776.8,390.5 L777.0,393.7 L777.2,394.2 L777.4,395.2 L777.5,397.1 L777.7,399.1 L777.9,399.9 L778.1,401.4 L778.2,401.3 L778.4,403.2 L778.7,404.2 L779.0,405.0 L779.3,407.0 L779.6,407.5 L779.9,409.3 L780.2,410.8 L780.5,412.0 L780.8,413.3 L781.1,414.3 L781.4,417.4 L781.7,417.4 L782.0,418.4 L782.2,419.0 L782.5,421.5 L782.7,421.5 L783.0,422.8 L783.3,425.3 L783.5,424.8 L783.8,424.6 L784.0,429.4 L784.3,430.4 L784.7,432.7 L785.1,431.3 L785.5,433.4 L785.9,436.1 L786.2,434.9 L786.6,437.3 L787.0,438.2 L787.4,440.5 L787.8,440.0 L788.2,443.3 L788.3,445.5 L788.5,445.8 L788.6,447.5 L788.8,448.2 L788.9,447.7 L789.0,450.9 L789.2,451.1 L789.3,453.7 L789.5,454.1 L789.6,456.0 L789.7,457.4 L789.9,459.7 L790.0,461.0 L790.1,460.5 L790.3,462.8 L790.4,465.6 L790.6,465.9 L790.7,466.7 L790.9,464.7 L791.2,464.0 L791.4,462.5 L791.6,462.4 L791.9,460.2 L792.1,459.3 L792.4,459.8 L792.6,454.9 L792.8,454.0 L793.1,452.0 L793.3,452.4 L794.6,453.7 L794.7,453.5 L794.7,457.2 L794.8,458.0 L794.9,460.7 L795.0,458.4 L795.0,460.9 L795.1,464.6 L795.2,465.5 L795.3,466.7 L795.3,468.0 L795.4,468.5 L795.5,469.8 L795.6,471.2 L795.6,473.4 L795.7,473.7 L795.8,475.5 L795.9,478.0 L795.9,476.8 L796.0,478.5 L796.1,481.2 L796.2,481.7 L796.2,483.1 L796.3,486.7 L796.4,486.4 L796.5,486.9 L796.5,489.8 L796.6,490.0 L796.7,493.8 L796.8,491.5 L797.0,493.3 L797.1,495.4 L797.2,496.0 L797.3,500.1 L797.5,499.7 L797.6,500.1 L797.7,502.3 L797.8,502.4 L797.9,503.9 L798.1,505.9 L798.2,509.5 L798.3,506.2 L798.4,510.2 L798.5,512.4 L798.7,513.1 L798.8,515.6 L798.9,515.5 L799.0,516.5 L799.2,517.5 L799.3,518.1 L799.4,520.3 L799.6,523.3 L799.7,521.8 L799.9,524.2 L800.1,525.1 L800.2,526.2 L800.4,526.1 L800.6,529.3 L800.7,531.2 L800.9,532.5 L801.1,534.6 L801.2,534.9 L801.4,535.8 L801.6,538.0 L801.7,539.7 L801.9,539.5 L802.1,540.2 L802.2,542.1 L802.4,545.5 L802.6,546.8 L802.7,546.2 L802.9,548.6 L803.1,550.7 L803.2,552.5 L803.4,552.5 L803.6,553.1 L803.7,554.8 L803.9,557.8 L804.0,560.1 L804.2,560.5 L804.3,559.1 L804.5,562.0 L804.6,562.5 L804.8,564.1 L804.9,564.8 L805.1,566.2 L805.2,568.0 L805.4,571.1 L805.5,571.3 L805.7,572.3 L805.8,573.2 L806.0,573.7 L806.1,575.5 L806.3,578.3 L806.4,579.2 L806.6,581.6 L806.7,581.2 L806.9,582.2 L807.0,581.9 L807.2,585.2 L807.3,584.4 L807.5,587.4 L808.1,587.6 L808.8,584.1 L809.5,583.4 L810.1,582.0 L810.3,582.0 L810.4,584.2 L810.6,585.1 L810.8,588.5 L810.9,589.0 L811.1,588.9 L811.3,589.5 L811.5,592.7 L811.6,593.6 L811.8,594.3 L812.0,597.4 L812.1,597.9 L812.3,599.6 L812.5,600.2 L812.6,601.6 L812.8,603.5 L813.4,604.2 L814.0,604.3 L814.6,607.7 L815.2,608.7 L815.8,607.8 L816.4,610.8 L817.0,613.1 L817.6,613.3 L818.2,614.3 L818.3,616.9 L818.5,616.6 L818.6,618.2 L818.8,618.2 L818.9,619.9 L819.0,620.3 L819.2,622.5 L819.3,624.9 L819.4,626.5 L819.6,628.4 L819.7,628.7 L819.9,628.9 L820.0,631.6 L820.1,632.3 L820.3,635.5 L820.4,637.0 L820.5,637.3 L820.7,636.5 L820.8,638.4 L821.0,640.4 L821.1,640.8 L821.2,643.3 L821.4,644.8 L821.5,646.3 L821.6,646.9 L821.8,647.1 L821.9,648.5 L822.1,650.5 L822.2,651.9 L822.4,654.5 L822.6,656.1 L822.8,656.8 L823.0,657.4 L823.2,659.0 L823.4,660.5 L823.6,662.2 L823.8,663.1 L824.0,662.0 L824.2,665.8 L824.4,666.5 L824.6,667.0 L824.8,669.2 L825.0,670.3 L825.2,671.2 L825.4,670.9 L825.6,674.0 L825.8,675.7 L826.0,676.4 L826.2,676.2 L826.4,679.5 L826.6,681.1 L826.8,681.8 L827.0,683.3 L827.2,683.9 L827.4,684.8 L827.6,686.8 L827.7,688.6 L827.9,689.0 L828.0,690.9 L828.2,695.2 L828.3,694.0 L828.5,694.7 L828.6,694.2 L828.8,697.2 L828.9,699.2 L829.1,699.0 L829.2,700.8 L829.4,700.1 L829.5,704.2 L829.7,704.3 L829.8,706.9 L830.0,708.8 L830.1,708.6 L830.3,711.1 L830.4,711.6 L830.6,712.4 L830.7,713.7 L830.9,714.4 L831.0,717.8 L831.2,718.7 L831.3,718.1 L831.5,721.2 L831.6,721.7 L832.3,719.6 L832.9,717.5 L833.6,718.8 L834.3,715.0 L834.9,716.1 L835.6,713.6 L836.4,714.9 L837.2,716.7 L838.1,717.4 L838.9,719.1 L839.7,719.0 L839.9,720.7 L840.1,722.3 L840.2,723.3 L840.4,725.5 L840.6,725.3 L840.8,728.1 L841.0,729.9 L841.2,729.7 L841.3,731.5 L841.5,731.9 L841.7,733.5 L841.9,735.4 L842.1,736.1 L842.2,736.9 L842.4,739.1 L842.6,740.6 L842.8,742.1 L843.0,743.8 L843.2,742.7 L843.3,747.2 L843.5,747.0 L843.7,748.5 L844.1,746.4 L844.5,745.4 L844.9,744.9 L845.3,744.0 L845.7,741.4 L846.1,740.6 L846.5,737.5 L846.9,737.9 L847.3,736.3 L847.7,735.1 L848.0,736.0 L848.3,738.7 L848.6,740.9 L849.0,741.5 L849.3,741.0 L849.6,744.7 L849.9,744.2 L850.2,745.8 L850.5,746.6 L850.9,749.0 L851.2,750.5 L851.5,751.4 L851.8,752.6 L852.1,751.0 L852.4,749.8 L852.7,748.2 L853.0,748.2 L853.3,745.3 L853.6,744.4 L854.0,743.0 L854.3,741.1 L854.6,740.3 L854.9,737.7 L855.2,738.2 L855.5,737.0 L855.8,735.1 L857.1,735.7 L858.5,738.5 L859.8,737.8 L860.0,735.6 L860.3,735.7 L860.5,734.2 L860.8,731.9 L861.0,730.8 L861.3,730.6 L861.5,728.5 L861.8,727.3 L862.0,727.1 L862.3,724.6 L862.5,721.4 L862.8,720.9 L863.0,721.2 L863.3,718.9 L863.5,716.6 L863.8,716.3 L864.0,713.0 L864.2,714.0 L864.4,713.9 L864.5,709.9 L864.7,707.7 L864.9,709.0 L865.1,706.7 L865.3,705.6 L865.5,704.3 L865.7,702.4 L865.8,702.5 L866.0,701.7 L866.2,699.8 L866.4,697.6 L866.6,697.9 L866.8,695.4 L867.0,694.8 L867.2,692.0 L867.3,692.3 L867.5,691.1 L867.7,690.4 L867.9,687.8 L868.1,686.9 L868.3,684.6 L868.5,684.8 L868.6,683.4 L868.8,682.4 L869.0,679.6 L869.2,678.7 L869.4,676.2 L869.6,676.0 L869.8,674.6 L869.9,672.8 L870.1,672.8 L870.3,671.9 L870.5,670.0 L870.7,669.4 L870.9,667.4 L871.1,664.8 L871.2,663.9 L871.4,662.8 L871.6,662.5 L871.8,661.5 L872.0,659.4 L872.2,659.0 L872.4,655.8 L872.6,655.3 L872.7,655.5 L872.9,653.2 L873.1,652.5 L873.3,648.3 L873.5,647.2 L873.7,646.7 L873.9,647.3 L874.0,646.6 L874.2,643.1 L874.4,641.4 L874.6,641.1 L874.7,638.8 L874.9,637.6 L875.0,637.7 L875.2,635.6 L875.3,636.4 L875.4,634.0 L875.6,631.3 L875.7,630.9 L875.8,629.2 L876.0,628.8 L876.1,627.6 L876.3,625.1 L876.4,625.0 L876.5,623.4 L876.7,621.4 L876.8,620.4 L877.0,619.5 L877.1,617.3 L877.2,615.6 L877.4,616.2 L877.5,613.6 L877.6,611.7 L877.8,611.5 L877.9,608.3 L878.1,608.5 L878.2,605.8 L878.3,605.4 L878.5,602.7 L878.6,602.5 L878.8,602.8 L878.9,600.4 L879.0,598.1 L879.2,599.7 L879.3,596.0 L879.4,596.8 L879.6,593.5 L879.7,591.3 L879.9,593.2 L880.0,590.1 L880.4,591.0 L880.9,593.6 L881.3,595.3 L881.7,594.2 L882.2,596.9 L882.6,598.2 L882.7,596.3 L882.8,596.2 L882.9,594.3 L883.0,591.7 L883.1,591.7 L883.2,591.1 L883.3,588.7 L883.4,588.3 L883.5,585.9 L883.7,585.1 L883.8,584.1 L883.9,582.6 L884.0,582.4 L884.1,580.8 L884.2,579.4 L884.3,577.9 L884.4,576.1 L884.5,573.5 L884.6,574.4 L884.7,573.7 L884.8,570.9 L884.9,569.1 L885.0,568.0 L885.1,567.9 L885.2,565.7 L885.3,563.2 L885.4,562.7 L885.5,560.8 L885.6,560.0 L885.8,558.0 L885.9,556.7 L886.0,557.7 L886.1,556.0 L886.2,552.1 L886.3,551.4 L886.4,550.6 L886.5,549.3 L886.6,547.1 L886.7,547.1 L886.8,546.7 L886.9,542.9 L887.1,543.9 L887.2,542.6 L887.3,540.2 L887.4,538.6 L887.6,538.0 L887.7,536.8 L887.8,533.3 L887.9,532.8 L888.1,533.2 L888.2,531.3 L888.3,529.7 L888.4,527.8 L888.5,526.8 L888.7,525.4 L888.8,527.6 L888.9,522.3 L889.0,523.8 L889.2,521.4 L889.3,519.9 L889.4,518.5 L889.5,516.7 L889.7,517.3 L889.8,514.9 L889.9,513.1 L890.0,511.7 L890.1,510.7 L890.3,508.1 L890.4,507.6 L890.5,506.0 L890.6,505.9 L890.8,504.5 L890.9,500.8 L891.0,501.1 L891.1,501.0 L891.3,497.5 L891.4,496.3 L891.5,496.1 L891.5,495.8 L891.5,493.3 L891.5,491.7 L891.5,489.6 L891.5,489.7 L891.5,487.7 L891.5,487.1 L891.5,486.0 L891.5,484.9 L891.5,482.6 L891.5,481.1 L891.5,480.3 L891.5,478.9 L891.5,477.8 L891.5,475.8 L891.5,475.0 L892.8,475.0 L894.1,474.9 L895.5,474.9 L896.8,474.9 L898.1,474.8 L899.4,474.8 L900.8,474.8 L902.1,474.7 L903.4,474.7 L903.6,473.1 L903.8,471.4 L904.0,470.0 L904.2,469.4 L904.4,469.0 L904.6,466.0 L904.8,465.7 L905.0,464.1 L905.2,462.5 L905.4,461.0 L905.5,460.3 L905.7,457.7 L905.8,457.4 L905.9,455.8 L906.1,450.7 L906.2,453.1 L906.3,451.9 L906.5,451.9 L906.6,447.6 L906.8,447.3 L906.9,446.2 L907.0,443.5 L907.2,444.3 L907.3,441.7 L907.5,440.8 L907.7,438.3 L908.0,436.6 L908.2,436.1 L908.4,437.5 L908.6,436.0 L908.9,430.2 L909.1,429.5 L909.3,430.0 L909.9,429.4 L910.6,427.3 L911.2,425.5 L911.9,424.8 L912.1,424.1 L912.3,422.3 L912.5,421.2 L912.7,419.9 L912.9,417.3 L913.1,418.3 L913.4,415.3 L913.6,415.6 L913.8,413.9 L914.0,411.9 L914.2,410.7 L914.4,409.3 L915.0,408.0 L915.5,404.9 L916.0,405.1 L916.6,404.5 L917.2,401.2 L917.7,401.5 L918.3,398.7 L919.0,400.0 L919.6,398.4 L920.3,394.8 L920.9,395.0 L921.8,394.0 L922.6,392.0 L923.5,390.5 L923.9,392.8 L924.3,392.8 L924.7,394.2 L925.1,395.0 L925.5,397.0 L925.6,395.9 L925.7,394.3 L925.9,392.5 L926.0,391.5 L926.1,389.8 L926.2,389.8 L926.3,386.9 L926.4,385.1 L926.6,384.4 L926.7,385.1 L926.8,382.7 L928.4,382.5 L930.0,383.3 L930.3,385.2 L930.5,386.6 L930.8,386.7 L931.0,389.2 L931.3,389.8 L931.8,391.7 L932.3,392.6 L932.9,393.4 L933.4,395.5 L933.9,397.0 L934.1,394.4 L934.2,394.0 L934.4,392.4 L934.5,392.0 L934.7,390.6 L934.8,388.2 L935.0,388.3 L935.2,387.3 L935.3,384.8 L935.5,382.7 L935.6,382.6 L935.8,380.7 L936.8,377.4 L937.8,378.4 L938.8,378.1 L939.1,380.0 L939.3,382.7 L939.6,381.3 L939.9,384.8 L940.2,386.9 L940.5,387.8 L940.7,384.9 L941.0,388.5 L942.1,390.9 L943.2,391.3 L944.3,392.4 L944.6,394.7 L944.9,394.8 L945.2,395.7 L945.5,397.4 L945.8,400.4 L946.1,401.0 L946.4,401.2 L946.7,403.2 L947.0,405.0 L947.3,406.0 L947.6,406.7 L947.9,407.4 L948.2,409.3 L948.4,409.9 L948.6,411.5 L948.8,412.6 L949.0,412.9 L949.2,414.4 L949.5,417.9 L949.7,417.2 L949.9,418.3 L950.1,420.9 L950.3,423.7 L950.5,424.8 L950.7,424.8 L951.0,425.7 L951.4,426.4 L951.7,428.2 L952.0,429.1 L952.3,430.8 L952.6,433.1 L953.0,432.8 L953.3,435.2 L953.7,435.7 L954.2,437.5 L954.6,439.1 L955.0,439.6 L955.5,440.9 L955.9,443.0 L956.2,443.2 L956.5,444.8 L956.9,447.4 L957.2,447.9 L957.5,446.4 L957.9,451.3 L958.2,451.9 L958.5,453.3 L958.7,453.7 L958.9,455.6 L959.0,454.2 L959.2,456.9 L959.4,461.0 L959.6,463.2 L959.8,464.6 L960.0,463.0 L960.1,465.0 L960.3,467.1 L960.5,467.6 L960.7,465.1 L960.9,466.7 L961.1,463.0 L961.3,462.8 L961.5,460.0 L961.6,460.2 L961.8,458.5 L962.0,458.3 L962.2,454.8 L962.4,454.6 L962.6,455.9 L962.8,459.0 L963.0,457.3 L963.1,460.2 L963.3,461.5 L963.5,461.9 L963.7,463.7 L963.8,464.8 L963.8,467.8 L963.9,468.9 L964.0,469.6 L964.1,470.7 L964.1,470.6 L964.2,473.2 L964.3,476.2 L964.4,476.9 L964.4,475.8 L964.5,476.4 L964.6,479.2 L964.7,481.3 L964.7,482.0 L964.8,483.6 L964.9,485.6 L965.0,487.5 L965.0,488.1 L965.1,490.5 L965.2,489.2 L965.3,492.4 L965.3,493.7 L965.4,493.1 L965.5,497.2 L965.6,495.7 L965.6,497.2 L965.7,500.0 L965.8,504.0 L965.9,504.0 L966.1,504.4 L966.2,506.7 L966.3,507.9 L966.4,507.0 L966.5,509.9 L966.7,512.2 L966.8,512.0 L966.9,513.5 L967.0,514.4 L967.2,516.9 L967.3,517.0 L967.4,518.3 L967.5,519.0 L967.6,520.6 L967.8,523.1 L967.9,524.7 L968.0,525.6 L968.2,526.6 L968.4,527.2 L968.6,530.0 L968.7,531.3 L968.9,533.6 L969.1,533.2 L969.3,534.6 L969.5,536.9 L969.7,539.2 L969.9,539.0 L970.0,540.3 L970.2,540.8 L970.4,542.7 L970.6,545.4 L970.8,546.6 L971.0,548.3 L971.2,546.8 L971.4,550.7 L971.5,550.2 L971.7,553.1 L971.9,551.5 L972.1,555.2 L972.3,556.4 L972.6,556.9 L972.8,560.3 L973.0,560.5 L973.3,562.9 L973.5,562.5 L973.7,566.2 L974.0,565.0 L974.2,568.7 L974.4,567.5 L974.7,568.3 L974.9,571.5 L975.2,571.5 L975.4,573.1 L975.6,573.1 L975.9,575.4 L976.1,577.1 L976.3,577.6 L976.6,580.0 L976.8,578.5 L977.0,583.0 L977.3,583.0 L977.5,584.7 L977.8,587.5 L978.0,586.9 L978.3,587.9 L978.5,589.4 L978.8,591.4 L979.0,593.0 L979.3,593.2 L979.5,594.1 L979.8,596.7 L980.0,598.3 L980.3,597.0 L980.5,599.0 L980.8,600.7 L981.0,604.4 L981.3,605.2 L981.5,606.0 L981.8,607.0 L982.0,606.6 L982.3,610.2 L982.5,609.9 L982.8,611.6 L983.3,612.0 L983.8,616.0 L984.3,613.8 L984.8,617.9 L985.3,617.9 L985.7,618.0 L986.2,620.3 L986.7,620.5 L987.2,622.8 L987.7,623.1 L988.2,625.0 L988.3,625.1 L988.4,630.4 L988.6,628.5 L988.7,631.4 L988.8,631.7 L988.9,633.7 L989.1,633.1 L989.2,634.7 L989.3,633.8 L989.4,639.4 L989.5,640.2 L989.7,639.9 L989.8,643.3 L989.9,644.4 L990.0,648.1 L990.2,646.7 L990.3,648.7 L990.4,649.8 L990.5,651.3 L990.7,651.8 L990.8,652.7 L990.9,654.5 L991.0,656.5 L991.2,658.3 L991.3,657.2 L991.5,658.5 L991.6,660.9 L991.7,664.1 L991.9,663.4 L992.0,663.2 L992.1,667.0 L992.3,668.2 L992.4,670.7 L992.6,670.3 L992.7,673.4 L992.8,671.9 L993.0,674.9 L993.1,675.4 L993.2,675.3 L993.4,677.6 L993.5,680.5 L993.7,681.6 L993.8,681.3 L993.9,684.2 L994.1,685.2 L994.2,686.5 L994.3,687.2 L994.5,688.5 L994.6,688.7 L994.8,690.7 L994.9,692.1 L995.1,693.6 L995.4,694.0 L995.6,695.8 L995.9,697.6 L996.1,699.0 L996.4,701.2 L996.6,700.5 L996.9,702.5 L997.1,704.5 L997.4,705.2 L997.6,707.2 L997.9,707.8 L998.1,710.8 L998.4,710.7 L998.6,711.1 L998.9,713.6 L999.2,715.7 L999.4,718.0 L999.7,715.7 L1000.0,718.8 L1000.2,720.4 L1000.5,722.7 L1000.8,724.5 L1001.1,724.2 L1001.3,724.1 L1001.6,727.0 L1002.3,726.4 L1003.0,725.4 L1003.6,723.5 L1004.3,721.7 L1004.7,723.1 L1005.1,723.6 L1005.5,728.2 L1005.9,725.9 L1006.3,726.9 L1006.7,730.7 L1007.1,731.4 L1007.5,733.1 L1007.9,734.1 L1008.3,735.1 L1008.6,738.1 L1008.9,739.1 L1009.2,738.4 L1009.4,741.2 L1009.7,740.3 L1010.0,741.0 L1010.3,745.2 L1010.6,744.9 L1010.9,744.4 L1011.1,747.8 L1011.4,748.4 L1011.7,750.9 L1012.0,751.6 L1012.3,752.2 L1012.6,753.5 L1012.8,756.3 L1013.1,755.8 L1013.4,758.2 L1013.7,759.3 L1014.0,757.0 L1014.4,757.1 L1014.7,757.1 L1015.0,754.5 L1015.4,753.7 L1015.7,751.7 L1016.0,748.9 L1016.4,748.3 L1016.7,747.3 L1017.0,746.3 L1017.4,743.9 L1017.7,743.2 L1018.8,742.7 L1019.9,740.3 L1020.9,740.0 L1022.0,738.9 L1023.1,737.8 L1023.5,738.0 L1024.0,741.5 L1024.5,741.9 L1024.9,743.2 L1025.3,744.4 L1025.8,745.8 L1026.1,742.3 L1026.4,741.7 L1026.7,740.9 L1027.0,741.5 L1027.3,738.5 L1027.6,738.4 L1027.9,735.4 L1028.2,734.2 L1028.5,733.3 L1028.8,733.5 L1029.1,729.4 L1029.4,729.6 L1029.7,728.8 L1030.0,727.2 L1030.3,725.7 L1030.6,725.2 L1030.9,723.3 L1031.2,721.7 L1031.5,719.4 L1031.8,719.8 L1032.0,717.1 L1032.3,716.3 L1032.6,716.8 L1032.9,716.5 L1033.2,714.3 L1033.4,711.9 L1033.7,709.5 L1034.0,708.2 L1034.3,709.4 L1034.5,706.8 L1034.8,703.7 L1035.1,705.5 L1035.4,703.2 L1035.7,702.7 L1035.9,700.5 L1036.2,696.6 L1036.5,697.5 L1036.7,695.4 L1036.9,694.7 L1037.1,693.3 L1037.2,693.7 L1037.4,690.1 L1037.6,689.4 L1037.8,688.1 L1038.0,686.7 L1038.2,684.4 L1038.4,682.9 L1038.5,680.2 L1038.7,681.8 L1038.9,679.9 L1039.1,678.9 L1039.3,676.3 L1039.5,676.1 L1039.7,673.7 L1039.9,672.3 L1040.0,672.4 L1040.2,671.3 L1040.4,669.9 L1040.6,668.0 L1040.9,666.7 L1041.1,665.1 L1041.4,665.6 L1041.6,664.1 L1041.9,661.0 L1042.1,659.2 L1042.4,659.4 L1042.6,658.1 L1042.9,655.6 L1043.1,657.5 L1043.4,651.8 L1043.6,651.8 L1043.9,651.6 L1044.1,651.1 L1044.4,646.9 L1044.6,647.1 L1044.9,647.7 L1045.1,646.4 L1045.4,643.4 L1045.6,642.4 L1045.9,641.1 L1046.0,638.9 L1046.2,638.9 L1046.3,636.1 L1046.4,633.9 L1046.6,633.1 L1046.7,633.4 L1046.8,630.7 L1047.0,631.8 L1047.1,630.7 L1047.2,629.1 L1047.4,627.5 L1047.5,626.6 L1047.6,624.5 L1047.8,623.8 L1047.9,622.1 L1048.0,621.1 L1048.1,618.0 L1048.3,617.0 L1048.4,615.4 L1048.5,615.9 L1048.7,614.3 L1048.8,611.7 L1048.9,610.2 L1049.1,609.3 L1049.2,609.5 L1049.3,607.2 L1049.5,605.8 L1049.6,604.0 L1049.7,603.3 L1049.9,603.7 L1050.0,600.8 L1051.3,601.5 L1052.6,603.5 L1052.7,601.8 L1052.8,602.6 L1053.0,600.3 L1053.1,597.1 L1053.2,598.1 L1053.3,594.4 L1053.4,594.9 L1053.5,590.5 L1053.7,590.8 L1053.8,591.4 L1053.9,588.6 L1054.0,587.1 L1054.1,586.6 L1054.2,585.3 L1054.4,583.5 L1054.5,582.0 L1054.6,583.2 L1054.7,581.6 L1054.8,579.1 L1054.9,576.3 L1055.1,575.6 L1055.2,574.6 L1055.3,574.0 L1055.4,573.9 L1055.5,570.4 L1055.6,569.8 L1055.8,567.9 L1055.9,567.2 L1056.0,565.0 L1056.1,564.8 L1056.2,564.3 L1056.3,561.4 L1056.5,560.2 L1056.6,559.3 L1056.7,557.9 L1056.8,555.2 L1056.9,557.0 L1057.0,552.5 L1057.1,552.2 L1057.2,550.3 L1057.3,551.4 L1057.4,548.0 L1057.5,546.7 L1057.6,547.7 L1057.7,544.4 L1057.8,542.4 L1057.9,541.8 L1058.0,540.6 L1058.1,538.4 L1058.1,537.6 L1058.2,536.2 L1058.3,535.8 L1058.4,534.5 L1058.5,533.2 L1058.6,530.9 L1058.7,530.5 L1058.8,528.2 L1058.9,528.2 L1059.0,526.1 L1059.1,523.9 L1059.2,524.2 L1059.3,520.1 L1059.4,520.3 L1059.4,518.0 L1059.5,516.8 L1059.5,516.2 L1059.5,513.8 L1059.6,512.5 L1059.6,510.4 L1059.6,511.1 L1059.7,508.9 L1059.7,510.5 L1059.7,507.8 L1059.8,504.5 L1059.8,505.7 L1059.8,503.1 L1059.9,502.8 L1059.9,499.2 L1059.9,500.2 L1060.0,498.8 L1060.0,496.0 L1060.0,494.2 L1060.0,493.3 L1060.1,492.7 L1060.1,493.5 L1060.1,491.6 L1060.2,489.9 L1060.2,486.9 L1060.2,485.4 L1060.3,484.8 L1060.3,482.8 L1060.3,481.3 L1060.4,480.2 L1060.4,479.9 L1060.4,477.7 L1060.5,476.7 L1060.5,475.1 L1061.9,475.1 L1063.4,475.1 L1064.8,475.1 L1066.2,475.1 L1067.7,475.1 L1069.1,475.1 L1070.5,475.1 L1072.0,475.1 L1073.4,475.1 L1073.6,473.5 L1073.8,472.1 L1073.9,470.6 L1074.1,470.8 L1074.3,468.4 L1074.5,468.3 L1074.7,465.2 L1074.9,465.0 L1075.0,461.2 L1075.2,460.8 L1075.4,459.8 L1075.5,458.4 L1075.7,456.4 L1075.8,455.6 L1075.9,453.4 L1076.0,452.7 L1076.2,450.9 L1076.3,450.1 L1076.4,448.5 L1076.5,446.4 L1076.7,445.6 L1076.8,444.7 L1076.9,442.0 L1077.0,442.0 L1077.2,441.7 L1077.3,439.1 L1077.6,437.6 L1077.9,437.1 L1078.2,435.8 L1078.5,433.1 L1078.7,433.9 L1079.0,433.8 L1079.3,429.0 L1079.6,430.9 L1079.9,427.4 L1080.9,428.3 L1081.9,430.7 L1082.0,430.8 L1082.1,426.2 L1082.1,427.8 L1082.2,425.5 L1082.3,422.7 L1082.4,421.8 L1082.5,420.3 L1082.5,419.1 L1082.6,419.0 L1082.7,417.1 L1082.8,413.4 L1082.9,414.3 L1082.9,413.8 L1083.0,412.0 L1083.1,410.6 L1084.4,411.0 L1085.7,408.0 L1086.1,407.4 L1086.5,410.8 L1086.9,411.9 L1087.3,413.9 L1087.7,414.4 L1087.8,411.6 L1088.0,410.3 L1088.1,410.0 L1088.2,408.8 L1088.3,405.5 L1088.5,406.3 L1088.6,404.5 L1088.7,403.8 L1088.9,399.0 L1089.0,400.2 L1089.3,399.4 L1089.6,396.7 L1090.0,395.8 L1090.3,395.8 L1090.6,395.4 L1090.9,392.6 L1091.2,391.0 L1091.6,391.1 L1091.9,387.6 L1092.2,387.2 L1093.8,387.2 L1095.5,387.2 L1095.9,388.4 L1096.4,389.3 L1096.8,390.1 L1097.2,392.6 L1097.7,395.8 L1098.1,395.0 L1098.3,394.0 L1098.5,392.9 L1098.7,391.1 L1098.9,390.9 L1099.0,388.7 L1099.2,386.3 L1099.4,386.0 L1099.6,386.1 L1099.8,383.2 L1100.0,382.0 L1100.3,384.6 L1100.6,384.8 L1101.0,388.3 L1101.3,388.0 L1101.6,389.7 L1101.9,390.5 L1102.9,391.8 L1103.9,393.7 L1104.1,393.2 L1104.4,390.9 L1104.6,388.3 L1104.8,388.8 L1105.1,386.0 L1105.3,387.4 L1105.6,385.4 L1105.8,383.3 L1107.1,382.0 L1108.4,380.7 L1108.7,382.7 L1108.9,380.7 L1109.2,386.2 L1109.4,385.3 L1109.7,387.9 L1109.9,391.1 L1110.2,388.2 L1110.4,391.1 L1111.7,389.4 L1113.0,388.5 L1113.3,390.2 L1113.6,391.5 L1114.0,390.7 L1114.3,392.8 L1114.6,396.5 L1114.9,395.7 L1115.2,398.2 L1115.6,397.5 L1115.9,399.3 L1116.2,401.5 L1116.4,401.0 L1116.7,404.4 L1116.9,406.5 L1117.2,406.8 L1117.4,407.7 L1117.7,409.5 L1117.9,411.0 L1118.2,411.6 L1118.4,413.7 L1118.7,416.4 L1118.9,418.0 L1119.2,416.4 L1119.4,418.3 L1119.7,418.3 L1120.0,422.8 L1120.3,423.2 L1120.6,424.7 L1120.9,425.4 L1121.2,425.9 L1121.5,428.4 L1121.8,429.8 L1122.1,431.2 L1122.4,430.2 L1122.7,432.6 L1123.0,434.9 L1123.3,434.9 L1123.6,436.1 L1123.9,438.2 L1124.1,438.8 L1124.4,442.7 L1124.7,442.3 L1125.0,443.3 L1125.3,444.3 L1125.7,445.4 L1126.0,447.1 L1126.4,447.9 L1126.8,450.0 L1127.2,451.6 L1127.5,452.9 L1127.9,453.3 L1128.0,453.3 L1128.1,455.6 L1128.3,457.3 L1128.4,457.3 L1128.5,460.2 L1128.6,461.0 L1128.7,462.5 L1128.8,464.1 L1129.0,464.4 L1129.1,467.9 L1129.2,468.7 L1129.3,468.4 L1129.4,470.7 L1129.6,472.3 L1129.7,472.0 L1129.8,474.1 L1130.1,472.5 L1130.4,472.2 L1130.8,467.6 L1131.1,468.9 L1131.4,468.9 L1131.8,471.8 L1132.1,473.4 L1132.4,473.2 L1132.8,476.3 L1133.1,476.7 L1133.2,480.3 L1133.3,479.7 L1133.3,480.8 L1133.4,482.3 L1133.5,482.5 L1133.6,485.5 L1133.6,486.5 L1133.7,488.4 L1133.8,490.5 L1133.9,490.5 L1133.9,492.0 L1134.0,493.5 L1134.1,496.3 L1134.2,494.4 L1134.2,497.3 L1134.3,498.0 L1134.4,500.0 L1134.5,501.5 L1134.6,503.5 L1134.8,504.1 L1134.9,506.1 L1135.0,506.9 L1135.1,507.4 L1135.2,508.8 L1135.4,509.4 L1135.5,512.4 L1135.6,513.1 L1135.7,515.7 L1135.9,517.2 L1136.0,516.6 L1136.1,517.8 L1136.2,520.8 L1136.3,520.7 L1136.5,523.1 L1136.6,524.9 L1136.7,525.6 L1136.9,526.6 L1137.1,530.1 L1137.2,528.9 L1137.4,531.4 L1137.6,531.9 L1137.8,530.8 L1138.0,534.9 L1138.2,536.2 L1138.3,538.3 L1138.5,538.9 L1138.7,539.7 L1138.9,541.2 L1139.1,542.8 L1139.2,545.2 L1139.4,545.5 L1139.6,548.4 L1139.8,549.3 L1140.0,549.1 L1140.2,552.2 L1140.3,550.2 L1140.5,553.9 L1140.7,555.2 L1140.9,555.5 L1141.1,557.7 L1141.3,560.2 L1141.6,560.4 L1141.8,561.5 L1142.0,564.2 L1142.2,563.5 L1142.4,564.7 L1142.6,567.8 L1142.9,568.7 L1143.1,567.9 L1143.3,570.8 L1143.5,572.7 L1143.7,573.1 L1143.9,574.1 L1144.2,576.0 L1144.4,577.3 L1144.6,577.7 L1144.8,580.5 L1145.0,579.4 L1145.2,582.2 L1145.5,585.7 L1145.7,583.8 L1145.9,586.1 L1146.1,587.4 L1146.3,586.4 L1146.5,589.2 L1146.7,590.1 L1147.0,592.6 L1147.2,593.4 L1147.4,597.0 L1147.6,595.5 L1147.8,597.7 L1148.0,599.2 L1148.3,600.9 L1148.5,602.5 L1148.7,601.3 L1148.9,606.4 L1149.1,605.1 L1149.3,606.0 L1149.6,606.4 L1149.8,608.9 L1150.0,608.8 L1150.2,612.1 L1150.4,612.6 L1150.6,614.8 L1150.9,615.0 L1151.1,617.1 L1151.3,620.6 L1151.5,619.6 L1152.8,619.6 L1154.2,619.6 L1155.5,619.6 L1155.6,622.1 L1155.8,622.4 L1155.9,622.5 L1156.0,626.3 L1156.1,624.4 L1156.3,626.0 L1156.4,630.0 L1156.5,629.4 L1156.7,632.7 L1156.8,633.2 L1156.9,636.1 L1157.0,637.0 L1157.2,637.1 L1157.3,637.2 L1157.4,639.8 L1157.6,641.9 L1157.7,641.9 L1157.8,640.2 L1158.0,644.0 L1158.1,645.3 L1158.2,646.9 L1158.3,647.9 L1158.5,650.7 L1158.6,649.6 L1158.7,652.6 L1158.9,651.5 L1159.0,652.6 L1159.1,655.1 L1159.2,656.6 L1159.4,657.8 L1159.5,660.0 L1159.7,660.6 L1159.8,663.2 L1160.0,664.5 L1160.2,665.3 L1160.4,666.7 L1160.5,667.1 L1160.7,668.1 L1160.9,669.0 L1161.1,671.3 L1161.2,671.8 L1161.4,673.9 L1161.6,676.3 L1161.8,677.4 L1161.9,679.5 L1162.1,678.5 L1162.3,678.5 L1162.5,680.9 L1162.6,685.3 L1162.8,685.3 L1163.0,685.5 L1163.2,688.6 L1163.3,688.1 L1163.5,691.5 L1163.7,690.7 L1163.9,692.0 L1164.0,694.4 L1164.2,693.9 L1164.4,696.1 L1164.6,699.5 L1164.7,699.3 L1164.9,700.2 L1165.1,700.4 L1165.4,702.5 L1165.6,704.0 L1165.8,704.6 L1166.1,707.0 L1166.3,709.1 L1166.5,709.2 L1166.8,711.4 L1167.0,712.0 L1167.2,713.2 L1167.5,713.6 L1167.7,716.6 L1168.0,718.2 L1168.2,717.7 L1168.4,718.6 L1168.7,721.2 L1168.9,722.1 L1169.1,724.4 L1169.4,725.1 L1169.6,725.7 L1169.8,725.7 L1170.1,729.0 L1170.3,729.7 L1170.8,728.5 L1171.4,725.8 L1171.9,724.2 L1172.5,722.5 L1173.0,723.0 L1173.5,724.8 L1174.1,725.0 L1174.6,723.3 L1175.1,727.0 L1175.7,728.4 L1176.2,730.1 L1176.7,731.5 L1177.2,732.3 L1177.8,734.6 L1178.3,735.1 L1178.6,737.5 L1178.9,737.6 L1179.2,740.7 L1179.6,740.4 L1179.9,741.0 L1180.2,743.3 L1180.5,743.1 L1180.8,745.6 L1181.1,746.2 L1181.5,748.1 L1181.8,750.1 L1182.1,748.8 L1182.4,752.6 L1183.2,751.8 L1183.9,750.5 L1184.7,748.9 L1185.4,748.7 L1186.2,747.2 L1186.9,745.3 L1187.7,744.5 L1188.2,742.3 L1188.6,742.8 L1189.0,741.6 L1189.5,738.1 L1190.0,737.6 L1190.4,735.9 L1190.8,736.7 L1191.3,734.1 L1191.8,732.1 L1192.2,733.7 L1192.6,731.4 L1193.1,729.7 L1193.4,731.3 L1193.7,732.6 L1194.0,733.6 L1194.3,735.1 L1194.6,737.3 L1194.9,738.2 L1195.2,738.6 L1195.5,740.5 L1195.8,741.8 L1196.0,742.3 L1196.2,738.6 L1196.4,736.4 L1196.6,736.5 L1196.9,733.9 L1197.1,736.4 L1197.3,733.0 L1197.5,731.6 L1197.7,730.1 L1197.9,730.3 L1198.1,726.0 L1198.3,725.6 L1198.5,722.7 L1198.7,724.3 L1199.0,721.6 L1199.2,722.1 L1199.4,718.7 L1199.6,716.6 L1199.8,716.3 L1200.0,714.3 L1200.2,714.5 L1200.4,711.6 L1200.7,711.4 L1200.9,709.1 L1201.1,707.8 L1201.3,706.6 L1201.5,707.5 L1201.7,703.5 L1202.0,703.6 L1202.2,702.8 L1202.4,699.9 L1202.6,697.9 L1202.8,699.6 L1203.0,698.5 L1203.3,695.2 L1203.5,693.0 L1203.7,693.8 L1203.9,691.6 L1204.1,689.5 L1204.3,688.6 L1204.6,685.3 L1204.8,685.6 L1205.0,683.9 L1205.2,682.5 L1205.4,683.1 L1205.6,681.5 L1205.9,681.6 L1206.1,675.9 L1206.3,676.6 L1206.5,676.0 L1206.7,673.8 L1206.8,674.7 L1207.0,673.1 L1207.2,670.9 L1207.3,669.6 L1207.5,667.4 L1207.6,666.4 L1207.8,665.1 L1208.0,661.7 L1208.1,664.9 L1208.3,662.4 L1208.5,662.5 L1208.6,660.3 L1208.8,658.3 L1209.0,657.3 L1209.1,653.5 L1209.3,652.9 L1209.4,653.4 L1209.6,650.9 L1209.8,648.4 L1209.9,648.7 L1210.1,646.1 L1210.3,646.1 L1210.4,646.4 L1210.6,642.3 L1210.8,641.7 L1210.9,641.4 L1211.1,639.6 L1211.2,638.5 L1211.4,636.1 L1211.6,635.3 L1211.7,632.0 L1211.9,633.1 L1212.2,631.6 L1212.4,631.8 L1212.7,628.1 L1213.0,627.7 L1213.2,627.3 L1213.5,626.6 L1213.8,625.2 L1214.0,621.8 L1214.3,621.0 L1214.6,621.9 L1214.8,618.4 L1215.1,617.9 L1215.4,615.4 L1215.7,614.3 L1215.9,610.7 L1216.2,611.9 L1216.5,608.9 L1216.7,608.8 L1217.0,607.5 L1217.3,608.6 L1217.5,606.7 L1217.8,605.1 L1218.1,602.8 L1218.3,600.7 L1218.6,600.8 L1218.7,600.0 L1218.9,597.4 L1219.0,596.8 L1219.2,596.6 L1219.3,594.1 L1219.5,593.0 L1219.6,590.7 L1219.8,591.5 L1219.9,589.7 L1220.1,588.6 L1220.2,588.2 L1220.4,583.6 L1220.5,584.0 L1220.7,583.3 L1220.8,581.7 L1221.0,580.4 L1221.1,579.3 L1221.3,576.0 L1221.4,576.1 L1221.6,576.1 L1221.7,573.6 L1221.9,572.1 L1222.0,571.9 L1222.2,568.0 L1222.3,568.9 L1222.5,568.7 L1222.6,565.9 L1222.7,564.3 L1222.9,562.4 L1223.0,562.5 L1223.1,560.2 L1223.3,558.5 L1223.4,558.2 L1223.5,555.1 L1223.7,556.2 L1223.8,553.0 L1223.9,552.3 L1224.1,552.3 L1224.2,550.2 L1224.3,549.2 L1224.5,549.1 L1224.6,547.9 L1224.7,547.2 L1224.8,543.2 L1225.0,543.4 L1225.1,539.5 L1225.2,540.7 L1225.4,539.9 L1225.5,536.5 L1225.6,536.4 L1225.8,535.5 L1225.9,533.2 L1226.0,531.4 L1226.2,532.3 L1226.3,528.1 L1226.4,528.3 L1226.6,527.8 L1226.7,525.6 L1226.8,524.5 L1226.8,524.5 L1226.9,523.1 L1227.0,520.8 L1227.1,520.8 L1227.1,518.4 L1227.2,515.1 L1227.3,514.7 L1227.4,514.0 L1227.4,512.6 L1227.5,509.3 L1227.6,512.1 L1227.7,506.8 L1227.7,505.9 L1227.8,506.2 L1227.9,504.6 L1228.0,504.7 L1228.0,502.0 L1228.1,500.9 L1228.2,499.9 L1228.2,497.1 L1228.3,495.2 L1228.4,494.7 L1228.5,494.9 L1228.5,492.3 L1228.6,492.5 L1228.7,489.3 L1228.8,489.4 L1228.8,487.3 L1228.9,486.8 L1229.0,484.6 L1229.1,483.5 L1229.1,481.5 L1229.2,481.9 L1229.3,479.3 L1229.4,478.5 L1229.4,477.4 L1229.5,475.4 L1230.9,475.4 L1232.3,475.4 L1233.7,475.4 L1235.1,475.4 L1236.5,475.4 L1237.9,475.4 L1239.3,475.4 L1240.7,475.4 L1242.1,475.4 L1242.2,473.2 L1242.3,471.9 L1242.5,471.4 L1242.6,471.5 L1242.7,467.8 L1242.8,466.5 L1242.9,465.3 L1243.0,464.6 L1243.2,462.6 L1243.3,461.6 L1243.4,461.1 L1243.6,460.3 L1243.8,457.4 L1244.1,457.2 L1244.3,454.7 L1244.5,454.4 L1244.7,453.8 L1245.0,449.9 L1245.2,450.7 L1245.4,449.4 L1245.6,448.3 L1245.8,446.7 L1246.0,445.8 L1246.2,444.6 L1246.5,441.6 L1246.7,441.5 L1246.9,441.0 L1247.1,440.4 L1247.3,437.8 L1247.8,435.0 L1248.3,434.3 L1248.9,432.1 L1249.4,432.1 L1249.9,430.7 L1250.4,428.1 L1250.9,426.7 L1251.4,427.0 L1251.9,424.8 L1252.1,425.8 L1252.4,420.1 L1252.6,422.6 L1252.8,418.7 L1253.1,419.0 L1253.3,417.4 L1253.5,417.0 L1253.7,414.3 L1254.0,412.3 L1254.2,411.9 L1254.9,413.1 L1255.7,415.2 L1256.4,415.7 L1256.7,413.5 L1256.9,413.5 L1257.2,411.8 L1257.4,410.7 L1257.7,409.3 L1258.1,408.0 L1258.6,407.3 L1259.0,406.2 L1259.4,403.8 L1259.9,402.4 L1260.3,401.5 L1260.7,398.0 L1261.1,398.0 L1261.4,396.0 L1261.8,397.0 L1262.2,395.0 L1262.7,392.6 L1263.2,391.7 L1263.7,391.6 L1264.2,389.8 L1265.2,392.1 L1266.1,392.4 L1266.8,392.3 L1267.4,388.9 L1268.0,388.7 L1268.7,387.2 L1269.7,387.0 L1270.7,384.6 L1270.9,385.0 L1271.1,387.0 L1271.3,387.3 L1271.5,389.1 L1271.8,391.8 L1272.0,392.5 L1272.2,393.3 L1272.4,394.4 L1272.6,396.3 L1273.0,396.5 L1273.3,394.3 L1273.7,390.9 L1274.0,393.0 L1274.4,389.0 L1274.7,387.9 L1275.1,386.2 L1275.4,384.8 L1275.8,384.0 L1276.3,386.1 L1276.8,385.4 L1277.4,388.3 L1277.9,389.3 L1278.4,391.1 L1279.4,394.5 L1280.4,394.4 L1280.7,393.4 L1280.9,392.0 L1281.2,390.7 L1281.4,389.3 L1281.7,387.4 L1281.9,385.9 L1282.3,384.7 L1282.7,388.9 L1283.1,389.5 L1283.5,391.8 L1283.9,392.7 L1284.3,393.7 L1284.4,394.4 L1284.6,395.4 L1284.7,396.6 L1284.8,399.2 L1284.9,400.1 L1285.1,400.6 L1285.2,402.4 L1285.3,404.4 L1285.4,404.7 L1285.6,406.6 L1285.7,407.4 L1285.8,406.7 L1285.9,410.7 L1286.1,412.0 L1286.2,413.2 L1287.0,415.3 L1287.8,417.1 L1288.6,416.3 L1289.4,418.3 L1289.8,420.2 L1290.3,421.2 L1290.7,422.3 L1291.1,424.3 L1291.6,425.7 L1292.0,426.1 L1292.2,426.1 L1292.4,430.2 L1292.7,429.8 L1292.9,430.6 L1293.1,431.9 L1293.3,433.7 L1293.6,434.1 L1293.8,437.6 L1294.0,437.8 L1294.2,439.5 L1294.4,439.5 L1294.6,442.5 L1294.8,443.2 L1295.0,444.3 L1295.1,446.5 L1295.3,446.7 L1295.5,447.8 L1295.7,449.9 L1295.9,450.7 L1296.1,450.1 L1296.2,452.1 L1296.4,455.1 L1296.6,457.0 L1296.8,455.5 L1296.9,458.5 L1297.1,459.1 L1297.3,460.8 L1297.5,463.0 L1297.6,465.2 L1297.8,466.8 L1298.0,467.2 L1298.2,468.2 L1298.3,469.0 L1298.5,470.2 L1298.8,467.0 L1299.0,468.0 L1299.3,465.1 L1299.5,463.9 L1299.8,463.7 L1300.0,465.1 L1300.2,464.7 L1300.4,469.4 L1300.6,469.5 L1300.8,470.6 L1301.0,472.0 L1301.2,473.0 L1301.4,474.2 L1301.6,476.1 L1301.8,476.7 L1301.9,477.4 L1302.0,479.7 L1302.0,481.0 L1302.1,483.0 L1302.2,482.4 L1302.3,485.2 L1302.3,486.2 L1302.4,488.3 L1302.5,489.6 L1302.6,490.6 L1302.6,492.2 L1302.7,493.6 L1302.8,495.9 L1302.9,496.2 L1302.9,497.8 L1303.0,497.7 L1303.1,500.0 L1303.3,501.1 L1303.5,503.4 L1303.7,505.0 L1303.9,504.3 L1304.1,506.5 L1304.4,507.6 L1304.6,509.3 L1304.8,510.1 L1305.0,511.4 L1305.2,513.1 L1305.4,514.6 L1305.6,516.8 L1305.8,516.3 L1306.0,517.5 L1306.2,520.6 L1306.5,521.6 L1306.7,522.2 L1306.9,522.6 L1307.1,526.1 L1307.3,525.3 L1307.5,527.7 L1307.6,530.1 L1307.7,530.6 L1307.8,531.5 L1307.9,532.8 L1308.0,535.1 L1308.1,535.6 L1308.2,535.2 L1308.3,537.5 L1308.4,537.4 L1308.5,541.3 L1308.6,543.1 L1308.7,544.6 L1308.8,543.5 L1308.9,548.3 L1309.0,549.3 L1309.1,548.7 L1309.2,548.1 L1309.3,550.6 L1309.4,553.8 L1309.5,556.1 L1309.6,555.4 L1309.9,556.1 L1310.2,556.1 L1310.6,558.3 L1310.9,562.4 L1311.2,561.8 L1311.5,561.7 L1311.8,562.3 L1312.2,566.3 L1312.5,567.7 L1312.8,568.2 L1313.0,569.0 L1313.2,570.6 L1313.3,572.2 L1313.5,573.0 L1313.7,574.1 L1313.9,575.4 L1314.0,576.7 L1314.2,579.8 L1314.4,580.3 L1314.6,582.2 L1314.8,584.3 L1314.9,581.5 L1315.1,585.0 L1315.3,587.4 L1315.5,587.5 L1315.6,588.4 L1315.8,590.7 L1316.0,591.6 L1316.3,592.3 L1316.6,593.3 L1317.0,595.1 L1317.3,596.8 L1317.6,598.0 L1317.9,600.2 L1318.2,600.6 L1318.6,601.4 L1318.9,606.2 L1319.2,604.4 L1319.4,605.5 L1319.5,606.8 L1319.7,608.3 L1319.8,609.1 L1320.0,609.6 L1320.1,612.8 L1320.2,615.4 L1320.4,613.5 L1320.5,615.9 L1320.7,618.5 L1320.8,618.7 L1321.0,621.3 L1321.1,622.1 L1321.3,623.5 L1322.1,621.3 L1322.9,621.2 L1323.7,619.8 L1324.5,619.3 L1324.7,621.1 L1325.0,619.4 L1325.2,623.6 L1325.5,625.9 L1325.7,626.0 L1326.0,627.4 L1326.2,627.9 L1326.5,630.1 L1326.7,630.9 L1327.0,631.1 L1327.2,632.5 L1327.5,632.7 L1327.7,636.3 L1327.9,638.0 L1328.0,639.1 L1328.2,641.3 L1328.3,641.8 L1328.5,643.6 L1328.7,642.8 L1328.8,643.6 L1329.0,646.2 L1329.2,647.8 L1329.3,649.8 L1329.5,650.6 L1329.6,651.9 L1329.8,653.4 L1330.0,654.7 L1330.3,656.3 L1330.5,657.5 L1330.8,658.9 L1331.0,659.4 L1331.3,661.1 L1331.5,661.1 L1331.8,662.7 L1332.0,664.9 L1332.3,666.9 L1332.5,667.0 L1332.8,667.7 L1333.0,670.4 L1334.1,672.4 L1335.2,671.7 L1336.2,671.9 L1337.3,674.7 L1337.4,675.1 L1337.5,676.2 L1337.7,676.3 L1337.8,679.7 L1337.9,683.2 L1338.0,682.1 L1338.1,683.4 L1338.2,686.7 L1338.3,687.0 L1338.5,688.1 L1338.6,691.0 L1338.7,689.8 L1338.8,692.3 L1338.9,694.2 L1339.1,695.2 L1339.2,695.2 L1339.3,696.8 L1339.4,699.1 L1340.2,699.5 L1341.0,696.3 L1341.8,694.9 L1342.6,693.8 L1343.4,695.9 L1344.1,694.1 L1344.9,696.9 L1345.6,696.3 L1346.4,700.5 L1347.1,699.2 L1347.9,701.3 L1348.3,702.7 L1348.6,703.0 L1349.0,705.4 L1349.3,706.9 L1349.7,708.0 L1350.1,709.0 L1350.4,710.9 L1350.8,711.7 L1351.1,712.8 L1351.5,715.3 L1351.8,716.8 L1352.2,717.3 L1352.5,714.7 L1352.8,713.7 L1353.2,712.7 L1353.5,712.5 L1353.8,709.5 L1354.1,711.2 L1354.4,708.4 L1354.8,707.2 L1355.1,706.6 L1355.4,704.5 L1355.6,705.1 L1355.7,707.6 L1355.9,709.0 L1356.0,711.2 L1356.2,710.3 L1356.3,714.1 L1356.5,714.6 L1356.6,715.7 L1356.8,717.8 L1356.9,717.9 L1357.0,719.3 L1357.2,721.7 L1357.3,721.9 L1357.5,723.6 L1357.9,723.3 L1358.3,722.3 L1358.7,719.7 L1359.1,718.4 L1359.5,716.2 L1359.8,714.6 L1360.2,715.6 L1360.6,711.7 L1361.0,711.5 L1361.4,710.3 L1361.8,708.7 L1362.2,709.1 L1362.6,710.7 L1363.0,712.0 L1363.4,716.2 L1363.8,715.8 L1364.2,718.1 L1364.6,720.1 L1365.0,719.4 L1365.3,719.1 L1365.6,718.2 L1366.0,715.1 L1366.3,713.6 L1366.6,714.5 L1366.9,713.2 L1367.2,709.4 L1367.6,710.3 L1367.9,708.2 L1368.2,706.6 L1368.6,708.7 L1369.0,710.1 L1369.5,712.3 L1369.9,711.1 L1370.3,713.0 L1370.7,715.5 L1371.1,715.3 L1371.6,717.4 L1372.0,718.1 L1372.4,719.4 L1372.5,716.4 L1372.7,716.2 L1372.8,716.3 L1372.9,713.5 L1373.1,711.2 L1373.2,710.9 L1373.3,710.2 L1373.5,709.2 L1373.6,707.7 L1373.7,706.6 L1373.9,703.7 L1374.0,702.8 L1374.1,701.3 L1374.3,700.3 L1374.4,699.9 L1374.5,699.4 L1374.7,696.5 L1374.8,696.5 L1374.9,695.2 L1375.1,691.6 L1375.2,690.6 L1375.3,690.2 L1375.5,687.4 L1375.6,687.4 L1376.2,688.1 L1376.8,683.1 L1377.4,682.6 L1378.1,683.3 L1378.7,680.6 L1379.3,680.8 L1379.9,678.9 L1380.2,676.6 L1380.5,677.3 L1380.8,674.3 L1381.1,674.2 L1381.4,673.2 L1381.6,669.3 L1381.9,668.6 L1382.2,666.3 L1382.5,665.6 L1382.8,666.3 L1383.1,664.0 L1383.9,665.1 L1384.7,667.0 L1385.5,668.7 L1386.3,668.3 L1386.5,668.0 L1386.8,666.3 L1387.0,663.8 L1387.2,662.5 L1387.4,661.8 L1387.7,661.0 L1387.9,659.8 L1388.1,657.7 L1388.4,655.7 L1388.6,654.5 L1388.8,654.9 L1389.0,652.2 L1389.3,652.5 L1389.5,649.1 L1389.8,647.1 L1390.0,647.3 L1390.3,645.4 L1390.5,644.6 L1390.8,641.7 L1391.1,641.5 L1391.3,639.7 L1391.6,638.2 L1391.9,636.0 L1392.1,634.4 L1392.4,634.2 L1392.7,633.7 L1392.9,632.1 L1393.2,630.7 L1393.4,629.5 L1393.7,627.8 L1394.0,625.2 L1394.2,626.3 L1394.5,624.1 L1394.8,622.0 L1395.0,620.9 L1395.3,621.1 L1395.6,619.1 L1395.8,615.9 L1396.1,618.4 L1396.3,613.6 L1396.6,615.5 L1396.9,613.3 L1397.1,610.2 L1397.4,611.2 L1397.7,609.9 L1397.9,608.4 L1398.2,606.7 L1398.5,605.1 L1398.7,603.7 L1399.0,602.2 L1399.3,600.4 L1399.5,599.8 L1399.8,599.5 L1400.1,596.8 L1400.3,597.5 L1400.6,592.7 L1400.9,593.0 L1401.2,590.1 L1401.4,588.5 L1401.7,589.2 L1402.0,587.3 L1402.2,585.7 L1402.5,583.9 L1402.8,583.4 L1403.0,580.7 L1403.3,580.9 L1403.5,579.4 L1403.8,577.8 L1404.0,575.8 L1404.3,576.1 L1404.5,572.5 L1404.8,573.5 L1405.0,572.1 L1405.3,571.0 L1405.5,569.3 L1405.8,568.7 L1406.0,566.3 L1406.3,564.2 L1406.5,563.9 L1407.6,563.2 L1408.7,561.0 L1409.7,560.4 L1410.8,559.6 L1412.1,559.0 L1413.4,557.1 L1414.8,558.2 L1416.1,556.4 L1417.1,554.1 L1418.2,556.1 L1419.2,554.0 L1420.3,553.2 L1420.8,553.7 L1421.4,551.9 L1421.9,550.2 L1422.4,548.6 L1423.0,547.2 L1423.5,545.8 L1424.0,545.7 L1424.6,547.8 L1425.1,548.6 L1425.6,550.1 L1426.2,551.9 L1426.7,553.2 L1427.8,551.4 L1428.8,551.2 L1429.9,550.0 L1431.2,550.6 L1432.5,551.3 L1433.7,553.0 L1435.0,553.9 L1436.3,554.3 L1437.6,553.4 L1438.9,554.9 L1440.1,558.5 L1441.4,556.0 L1442.7,556.4 L1444.0,557.3 L1445.3,556.4 L1446.5,558.7 L1447.8,559.7 L1449.1,558.6" stroke="#2e8a7e"/>
<path d="M502.6,542.2 C503.9,543.6 505.4,544.2 507.5,547.5 C509.6,550.8 508.6,548.9 510.3,554.4 C512.0,559.9 512.0,561.6 513.8,568.3 C515.6,575.0 515.4,574.4 517.2,579.4 C519.0,584.4 518.8,584.7 520.7,587.1 C522.6,589.5 522.4,589.8 524.2,588.5 C526.0,587.2 525.8,584.3 527.6,582.2 C529.4,580.1 529.0,581.7 531.1,580.6 C533.2,579.5 533.4,582.1 535.3,578.1 C537.2,574.1 536.4,573.4 538.1,565.6 C539.8,557.8 539.7,557.1 541.5,548.9 C543.3,540.7 542.9,543.2 545.0,535.0 C547.1,526.8 547.0,526.8 549.2,518.3 C551.4,509.8 551.5,510.0 553.3,503.1 C555.1,496.2 554.8,496.3 556.1,492.6 C557.4,488.9 557.3,492.3 558.2,489.2 C559.1,486.1 558.9,489.2 559.6,480.8 C560.3,472.4 560.1,472.1 561.0,457.8 C561.9,443.5 562.1,440.1 563.1,427.2 C564.1,414.3 563.6,412.0 564.9,409.4 C566.2,406.8 566.2,413.1 567.9,417.5 C569.6,421.9 569.5,421.3 571.4,425.8 C573.3,430.3 573.4,431.4 574.9,434.2 C576.4,437.0 575.7,438.5 577.2,436.3 C578.7,434.1 578.6,431.9 580.4,425.8 C582.2,419.7 581.8,419.6 583.9,413.3 C586.0,407.0 586.3,406.3 588.1,402.2 C589.9,398.1 589.5,400.7 590.8,398.1 C592.1,395.5 591.6,397.0 592.9,392.5 C594.2,388.0 594.2,388.4 595.7,381.4 C597.2,374.4 596.8,373.3 598.5,366.1 C600.2,358.9 600.0,356.7 602.0,354.3 C604.0,351.9 603.9,355.1 606.1,357.1 C608.3,359.1 608.1,360.1 610.3,361.9 C612.5,363.7 612.4,361.4 614.4,364.0 C616.4,366.6 616.2,365.9 617.9,371.7 C619.6,377.5 619.7,370.8 620.7,385.6 C621.7,400.4 621.2,408.7 621.8,427.2 C622.4,445.7 622.0,443.9 622.8,455.0 C623.6,466.1 624.3,462.2 624.9,468.9 C625.5,475.6 624.1,471.5 625.2,480.0 C626.3,488.5 627.0,483.4 629.1,500.7 C631.2,518.0 631.1,522.7 633.0,544.8 C634.9,566.9 634.4,559.5 636.1,583.7 C637.8,607.9 637.1,619.0 639.4,635.6 C641.7,652.2 642.2,637.7 644.6,646.0 C647.0,654.3 646.4,662.6 648.5,666.7 C650.6,670.8 650.5,665.7 652.4,661.5 C654.3,657.3 653.4,649.7 655.8,651.1 C658.2,652.5 658.6,657.0 661.5,666.7 C664.4,676.4 663.9,677.0 666.7,687.4 C669.5,697.8 668.8,697.3 671.9,705.6 C675.0,713.9 675.2,710.2 678.3,718.5 C681.4,726.8 681.1,730.1 683.5,736.7 C685.9,743.3 685.0,743.2 687.4,743.2 C689.8,743.2 689.1,744.7 692.6,736.7 C696.1,728.7 696.6,727.8 700.4,713.3 C704.2,698.8 704.2,700.2 706.9,682.2 C709.6,664.2 708.6,670.8 710.7,645.9 C712.8,621.0 712.9,617.2 714.6,588.9 C716.3,560.6 715.8,563.1 717.2,539.6 C718.6,516.1 718.7,520.1 719.8,500.7 C720.9,481.3 720.5,480.3 721.4,466.7 C722.3,453.1 722.3,456.7 723.3,449.8 C724.3,442.9 724.1,443.8 725.3,440.7 C726.5,437.6 726.7,440.6 727.9,438.2 C729.1,435.8 728.8,438.6 729.8,431.7 C730.8,424.8 730.7,421.0 731.8,412.2 C732.9,403.4 732.8,400.7 734.0,398.6 C735.2,396.5 735.0,398.7 736.3,404.4 C737.6,410.1 737.5,415.1 738.9,420.0 C740.3,424.9 739.4,420.5 741.5,422.6 C743.6,424.7 744.6,428.3 746.7,427.8 C748.8,427.3 747.6,423.5 749.3,420.7 C751.0,417.9 751.5,420.0 753.2,417.4 C754.9,414.8 754.0,415.7 755.7,410.9 C757.4,406.1 757.5,405.5 759.6,399.3 C761.7,393.1 761.4,393.3 763.5,387.6 C765.6,381.9 765.1,381.5 767.4,377.9 C769.7,374.3 769.2,375.5 772.0,374.0 C774.8,372.5 775.2,371.1 777.8,372.3 C780.4,373.5 779.5,374.1 781.7,378.5 C783.9,382.9 783.8,380.6 786.2,388.9 C788.6,397.2 789.2,395.8 790.7,409.6 C792.2,423.4 791.3,426.9 792.0,440.7 C792.7,454.5 792.3,448.4 793.3,461.5 C794.3,474.6 794.6,474.3 795.9,490.0 C797.2,505.7 796.4,501.5 798.1,520.3 C799.8,539.1 800.0,537.0 802.1,560.6 C804.2,584.2 804.2,588.2 806.1,608.9 C808.0,629.6 807.1,629.1 809.3,638.4 C811.5,647.7 812.0,635.9 814.2,643.8 C816.4,651.7 815.9,664.4 817.7,668.0 C819.5,671.6 819.0,662.2 820.9,657.2 C822.8,652.2 822.4,647.8 824.9,649.2 C827.4,650.6 827.1,650.4 830.3,662.6 C833.5,674.8 833.4,681.2 837.0,694.8 C840.6,708.4 840.1,702.9 843.7,713.6 C847.3,724.3 846.7,724.4 850.4,735.1 C854.1,745.8 854.1,753.2 857.7,753.9 C861.3,754.6 860.4,747.8 863.8,737.8 C867.2,727.8 867.0,732.8 870.6,716.3 C874.2,699.8 874.1,703.2 877.3,676.0 C880.5,648.8 880.5,645.1 882.6,614.3 C884.7,583.5 883.6,587.8 885.3,560.6 C887.0,533.4 887.3,539.4 888.8,512.2 C890.3,485.0 889.9,477.3 891.1,458.5 C892.3,439.7 892.0,447.2 893.4,441.7 C894.8,436.2 894.8,441.6 896.3,437.8 C897.8,434.0 897.2,437.8 898.9,427.4 C900.6,417.0 900.8,404.4 902.5,398.9 C904.2,393.4 903.9,400.8 905.4,406.7 C906.9,412.6 906.6,416.5 908.0,421.0 C909.4,425.5 909.2,422.5 910.6,423.5 C912.0,424.5 911.7,423.2 913.2,424.8 C914.7,426.4 914.7,429.6 916.4,429.4 C918.1,429.2 917.7,426.4 919.6,424.2 C921.5,422.0 921.4,426.0 923.5,421.0 C925.6,416.0 925.0,413.7 927.4,405.4 C929.8,397.1 929.8,394.7 932.6,389.8 C935.4,384.9 935.2,389.4 937.8,387.2 C940.4,385.0 939.5,383.3 942.3,381.4 C945.1,379.5 945.3,377.8 948.2,380.0 C951.1,382.2 950.6,382.0 953.3,389.8 C956.0,397.6 956.8,400.0 958.5,409.3 C960.2,418.6 958.8,403.4 959.8,424.8 C960.8,446.2 960.6,464.1 962.4,489.6 C964.2,515.1 964.5,501.4 966.7,520.3 C968.9,539.2 968.5,539.1 970.7,560.6 C972.9,582.1 972.8,579.3 974.8,600.8 C976.8,622.3 975.8,628.2 978.3,641.1 C980.8,654.0 981.9,641.3 984.2,649.2 C986.5,657.1 984.8,668.9 986.9,670.7 C989.0,672.5 989.3,658.1 992.2,655.9 C995.1,653.7 994.7,655.1 997.6,662.6 C1000.5,670.1 999.8,669.8 1003.0,684.1 C1006.2,698.4 1006.1,702.7 1009.7,716.3 C1013.3,729.9 1012.8,725.4 1016.4,735.1 C1020.0,744.8 1019.9,748.3 1023.1,752.6 C1026.3,756.9 1025.3,757.3 1028.5,751.2 C1031.7,745.1 1031.3,745.5 1035.2,729.7 C1039.1,713.9 1039.6,712.2 1043.2,692.1 C1046.8,672.0 1046.1,678.8 1048.6,654.5 C1051.1,630.2 1050.8,627.3 1052.6,600.8 C1054.4,574.3 1053.9,578.1 1055.3,555.2 C1056.7,532.3 1056.8,539.3 1058.0,514.9 C1059.2,490.5 1058.6,482.2 1059.8,463.7 C1061.0,445.2 1060.9,451.8 1062.4,445.6 C1063.9,439.4 1064.1,445.9 1065.6,440.4 C1067.1,434.9 1066.6,436.2 1068.2,424.8 C1069.8,413.4 1070.0,402.4 1071.7,397.6 C1073.4,392.8 1073.4,400.5 1074.7,406.7 C1076.0,412.9 1075.5,416.1 1076.7,420.9 C1077.9,425.7 1077.9,423.2 1079.3,424.8 C1080.7,426.4 1080.2,425.1 1081.9,426.8 C1083.6,428.5 1083.6,431.8 1085.7,431.3 C1087.8,430.8 1087.7,427.4 1089.6,424.8 C1091.5,422.2 1091.2,425.0 1092.9,421.6 C1094.6,418.2 1094.2,417.3 1096.1,411.9 C1098.0,406.5 1097.9,407.4 1100.0,401.5 C1102.1,395.6 1101.5,394.0 1103.9,389.8 C1106.3,385.6 1106.7,388.1 1109.1,385.9 C1111.5,383.7 1110.8,383.1 1113.0,381.4 C1115.2,379.7 1115.4,378.2 1117.5,379.4 C1119.6,380.6 1118.8,381.4 1120.7,385.9 C1122.6,390.4 1122.5,389.4 1124.6,396.3 C1126.7,403.2 1127.1,403.6 1128.5,411.9 C1129.9,420.2 1129.1,412.5 1129.8,427.4 C1130.5,442.3 1130.1,453.4 1131.1,467.6 C1132.1,481.8 1132.2,466.5 1133.7,480.6 C1135.2,494.7 1134.8,499.0 1136.7,520.3 C1138.6,541.6 1138.5,538.4 1140.7,560.6 C1142.9,582.8 1143.0,581.7 1144.8,603.5 C1146.6,625.3 1145.4,630.7 1147.5,642.5 C1149.6,654.3 1150.5,639.9 1152.8,647.8 C1155.1,655.7 1153.8,669.1 1156.0,672.0 C1158.2,674.9 1158.2,660.4 1160.9,658.6 C1163.6,656.8 1163.4,658.5 1166.3,665.3 C1169.2,672.1 1168.4,670.5 1171.6,684.1 C1174.8,697.7 1174.4,702.7 1178.3,716.3 C1182.2,729.9 1182.8,726.5 1186.4,735.1 C1190.0,743.7 1189.3,744.6 1191.8,748.5 C1194.3,752.4 1193.3,754.2 1195.8,749.9 C1198.3,745.6 1197.6,746.4 1201.2,732.4 C1204.8,718.4 1205.3,714.7 1209.2,697.5 C1213.1,680.3 1213.0,690.2 1215.9,668.0 C1218.8,645.8 1218.2,642.9 1220.0,614.3 C1221.8,585.7 1221.2,587.1 1222.6,560.6 C1224.0,534.1 1223.9,538.3 1225.3,514.9 C1226.7,491.5 1226.5,487.8 1227.9,472.8 C1229.3,457.8 1229.3,464.2 1230.5,458.5 C1231.7,452.8 1231.4,453.8 1232.4,451.4 C1233.4,449.0 1233.2,453.7 1234.4,449.4 C1235.6,445.1 1235.7,444.5 1236.9,435.2 C1238.1,425.9 1237.9,424.8 1238.9,414.4 C1239.9,404.0 1239.6,399.0 1240.8,396.3 C1242.0,393.6 1242.0,397.5 1243.4,404.1 C1244.8,410.7 1244.4,415.0 1246.0,420.9 C1247.6,426.8 1247.7,423.7 1249.3,426.1 C1250.9,428.5 1250.7,427.6 1251.9,430.0 C1253.1,432.4 1252.6,435.2 1253.8,435.2 C1255.0,435.2 1254.9,431.7 1256.4,430.0 C1257.9,428.3 1257.9,430.4 1259.6,428.7 C1261.3,427.0 1261.2,427.6 1262.9,423.5 C1264.6,419.4 1264.2,418.7 1266.1,413.2 C1268.0,407.7 1268.1,408.7 1270.0,402.8 C1271.9,396.9 1271.5,395.1 1273.2,391.1 C1274.9,387.1 1274.8,390.1 1276.5,387.9 C1278.2,385.7 1278.0,384.4 1279.7,382.7 C1281.4,381.0 1281.2,382.3 1283.0,381.4 C1284.8,380.5 1284.9,378.3 1286.6,379.2 C1288.3,380.1 1288.0,381.4 1289.4,384.6 C1290.8,387.8 1290.3,386.2 1292.0,391.1 C1293.7,396.0 1294.2,396.6 1295.9,402.8 C1297.6,409.0 1297.5,401.6 1298.5,414.4 C1299.5,427.2 1298.9,436.5 1299.8,450.7 C1300.7,464.9 1300.6,459.6 1301.8,467.6 C1303.0,475.6 1303.2,472.0 1304.4,480.6 C1305.6,489.2 1305.5,487.4 1306.3,500.0 C1307.1,512.6 1306.4,510.7 1307.5,527.7 C1308.6,544.7 1308.9,542.9 1310.6,563.9 C1312.3,584.9 1312.2,586.6 1313.8,606.5 C1315.4,626.4 1314.9,628.7 1316.6,638.4 C1318.3,648.1 1318.5,638.7 1320.2,642.7 C1321.9,646.7 1321.7,645.7 1323.0,653.4 C1324.3,661.1 1323.8,667.5 1325.1,671.5 C1326.4,675.5 1325.9,673.1 1327.7,668.3 C1329.5,663.5 1329.3,655.1 1331.9,653.4 C1334.5,651.7 1335.0,657.9 1337.3,661.9 C1339.6,665.9 1338.8,662.6 1340.5,668.3 C1342.2,674.0 1341.7,676.4 1343.7,683.2 C1345.7,690.0 1345.1,688.7 1347.9,693.8 C1350.7,698.9 1350.6,697.7 1354.3,702.3 C1358.0,706.9 1358.1,707.8 1361.8,710.9 C1365.5,714.0 1364.2,713.5 1368.2,714.1 C1372.2,714.7 1373.0,716.1 1376.7,713.0 C1380.4,709.9 1379.4,712.5 1382.0,702.3 C1384.6,692.1 1384.0,688.9 1386.3,674.7 C1388.6,660.5 1388.2,663.9 1390.5,649.1 C1392.8,634.3 1392.2,638.0 1394.8,619.3 C1397.4,600.6 1397.5,598.1 1400.1,578.8 C1402.7,559.5 1402.4,558.8 1404.4,546.9 C1406.4,535.0 1405.3,539.8 1407.6,534.1 C1409.9,528.4 1410.4,525.6 1412.9,525.6 C1415.4,525.6 1414.4,529.0 1417.1,534.1 C1419.8,539.2 1420.2,542.4 1423.1,544.7 C1426.0,547.0 1424.8,542.0 1427.8,542.6 C1430.8,543.2 1430.2,544.6 1434.2,546.9 C1438.2,549.2 1438.7,548.3 1442.7,551.1 C1446.7,553.9 1447.4,555.8 1449.1,557.5" stroke="#4f9f4c"/>
</g>
<rect x="479.5" y="194.5" width="994.0" height="663.5" fill="none" stroke="#000" stroke-width="1.4"/>
<g stroke="#000" stroke-width="1">
<line x1="493.5" y1="858" x2="493.5" y2="852"/><line x1="493.5" y1="194.5" x2="493.5" y2="200.5"/>
<line x1="662.5" y1="858" x2="662.5" y2="852"/><line x1="662.5" y1="194.5" x2="662.5" y2="200.5"/>
<line x1="831.5" y1="858" x2="831.5" y2="852"/><line x1="831.5" y1="194.5" x2="831.5" y2="200.5"/>
<line x1="1000.5" y1="858" x2="1000.5" y2="852"/><line x1="1000.5" y1="194.5" x2="1000.5" y2="200.5"/>
<line x1="1169.5" y1="858" x2="1169.5" y2="852"/><line x1="1169.5" y1="194.5" x2="1169.5" y2="200.5"/>
<line x1="1338.5" y1="858" x2="1338.5" y2="852"/><line x1="1338.5" y1="194.5" x2="1338.5" y2="200.5"/>
<line x1="479.5" y1="223.5" x2="485.5" y2="223.5"/>
<line x1="479.5" y1="324.5" x2="485.5" y2="324.5"/>
<line x1="479.5" y1="425.5" x2="485.5" y2="425.5"/>
<line x1="479.5" y1="526.5" x2="485.5" y2="526.5"/>
<line x1="479.5" y1="627.5" x2="485.5" y2="627.5"/>
<line x1="479.5" y1="728.5" x2="485.5" y2="728.5"/>
<line x1="479.5" y1="829.5" x2="485.5" y2="829.5"/>
<line x1="1473.5" y1="260.5" x2="1467.5" y2="260.5"/>
<line x1="1473.5" y1="393" x2="1467.5" y2="393"/>
<line x1="1473.5" y1="525.5" x2="1467.5" y2="525.5"/>
<line x1="1473.5" y1="658" x2="1467.5" y2="658"/>
<line x1="1473.5" y1="790.5" x2="1467.5" y2="790.5"/>
</g>
<g font-family='"Liberation Sans", sans-serif' font-size="16.8" fill="#000" letter-spacing="0.9">
<text x="493.5" y="876" text-anchor="middle">138</text>
<text x="662.5" y="876" text-anchor="middle">140</text>
<text x="831.5" y="876" text-anchor="middle">142</text>
<text x="1000.5" y="876" text-anchor="middle">144</text>
<text x="1169.5" y="876" text-anchor="middle">146</text>
<text x="1338.5" y="876" text-anchor="middle">148</text>
<text x="474" y="228" text-anchor="end">0.15</text>
<text x="474" y="329" text-anchor="end">0.10</text>
<text x="474" y="430" text-anchor="end">0.05</text>
<text x="474" y="531" text-anchor="end">0.00</text>
<text x="474" y="632" text-anchor="end">−0.05</text>
<text x="474" y="733" text-anchor="end">−0.10</text>
<text x="474" y="834" text-anchor="end">−0.15</text>
<text x="1478.5" y="265.0" letter-spacing="1.3">−0.0000084</text>
<text x="1478.5" y="397.5" letter-spacing="1.3">−0.0000086</text>
<text x="1478.5" y="530.0" letter-spacing="1.3">−0.0000088</text>
<text x="1478.5" y="662.5" letter-spacing="1.3">−0.0000090</text>
<text x="1478.5" y="795.0" letter-spacing="1.3">−0.0000092</text>
</g>
<rect x="486.7" y="127.7" width="979.6" height="46.4" fill="#fff" stroke="#000" stroke-width="1.4"/>
<g stroke-width="1.4"><line x1="496" y1="139.5" x2="516" y2="139.5" stroke="#e41a1c"/><line x1="496" y1="160.5" x2="516" y2="160.5" stroke="#66639a"/><line x1="894" y1="139.5" x2="914" y2="139.5" stroke="#2e8a7e"/><line x1="1309" y1="139.5" x2="1329" y2="139.5" stroke="#4f9f4c"/></g>
<g font-family='"Liberation Sans", sans-serif' font-size="15.3" fill="#000"><text x="531" y="145">support_ymax</text><text x="531" y="166">support_ymin</text><text x="929" y="145">stabilizer_zmp_y</text><text x="1342" y="145" textLength="117">realRobot_zmp_y</text></g>
<text x="476" y="913.5" font-family='"Liberation Sans", sans-serif' font-size="31.5" letter-spacing="2.5" fill="#f00" stroke="#e00" stroke-width="0.5" paint-order="stroke">Save button</text>
</svg>
</body></html>
